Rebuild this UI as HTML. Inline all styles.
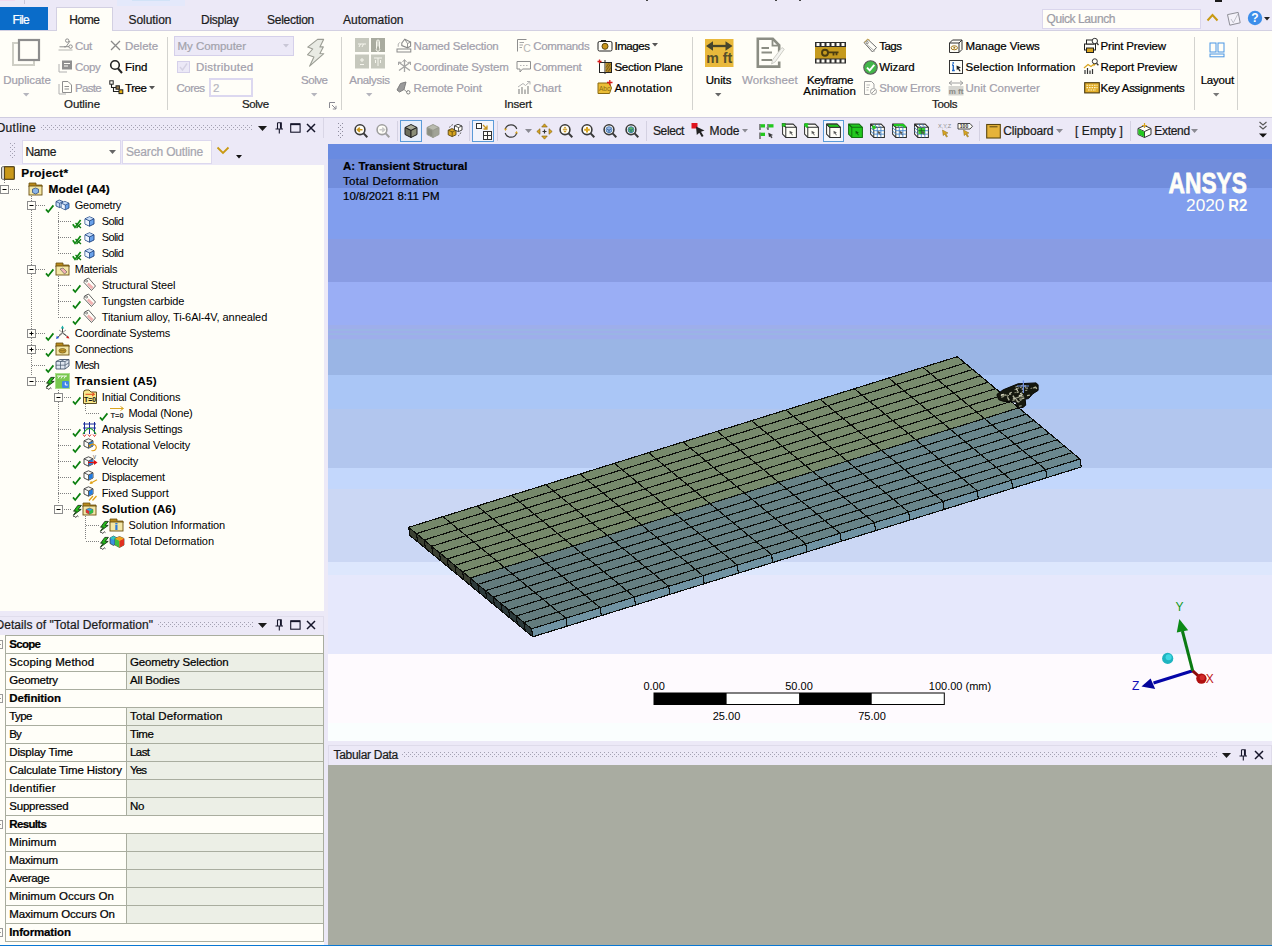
<!DOCTYPE html>
<html><head><meta charset="utf-8"><title>Mechanical</title><style>
html,body{margin:0;padding:0}
body{width:1272px;height:946px;overflow:hidden;background:#ece9f7;position:relative;font-family:"Liberation Sans",sans-serif;}
.r{position:absolute;display:block}
.t{position:absolute;white-space:nowrap;line-height:16px;height:16px;font-family:"Liberation Sans",sans-serif;-webkit-text-stroke:0.22px currentColor}
svg{overflow:visible}
</style></head>
<body>
<div class="r" style="left:117px;top:0px;width:68px;height:6px;background:#e4e9fb;"></div>
<div class="r" style="left:24px;top:0px;width:1px;height:4px;background:#c9c6d8;"></div>
<div class="r" style="left:0px;top:0px;width:15px;height:1px;background:#f3d9ee;"></div>
<div class="r" style="left:646px;top:0px;width:1.5px;height:1px;background:#444;"></div>
<div class="r" style="left:775px;top:0px;width:1.5px;height:1px;background:#444;"></div>
<div class="r" style="left:799px;top:0px;width:1.5px;height:1px;background:#444;"></div>
<div class="r" style="left:1215px;top:0px;width:7px;height:1.5px;background:#1a1a1a;"></div>
<div class="r" style="left:132px;top:0px;width:38px;height:1px;background:#d2e3f7;"></div>
<div class="r" style="left:0px;top:7px;width:48px;height:23px;background:#0a6cc9;"></div>
<div class="t" style="left:12.55px;top:11.60px;font-size:12px;color:#ffffff;letter-spacing:-0.709px;">File</div>
<div class="r" style="left:0px;top:30px;width:1272px;height:88px;background:#fffef8;"></div>
<div class="r" style="left:0px;top:30px;width:1272px;height:1px;background:#d3d0e2;"></div>
<div class="r" style="left:56px;top:7px;width:57px;height:24px;background:#fffef8;border:1px solid #d3d0e2;border-bottom:none;box-sizing:border-box"></div>
<div class="t" style="left:69.30px;top:11.80px;font-size:12px;color:#1b1b1b;letter-spacing:-0.502px;">Home</div>
<div class="t" style="left:128.50px;top:11.80px;font-size:12px;color:#1b1b1b;letter-spacing:-0.046px;">Solution</div>
<div class="t" style="left:201.00px;top:11.80px;font-size:12px;color:#1b1b1b;letter-spacing:-0.264px;">Display</div>
<div class="t" style="left:267.00px;top:11.80px;font-size:12px;color:#1b1b1b;letter-spacing:-0.263px;">Selection</div>
<div class="t" style="left:343.00px;top:11.80px;font-size:12px;color:#1b1b1b;letter-spacing:-0.020px;">Automation</div>
<div class="r" style="left:0px;top:117px;width:1272px;height:1px;background:#cfcce0;"></div>
<div class="r" style="left:1042px;top:9px;width:159px;height:19.5px;background:#fffef8;border:1px solid #dad6ec;box-sizing:border-box"></div>
<div class="t" style="left:1046.50px;top:10.80px;font-size:12px;color:#9d9da6;letter-spacing:-0.406px;">Quick Launch</div>
<svg class="r" style="left:1206px;top:13px;" width="13" height="9" viewBox="0 0 13 9"><path d="M1.5 7.5 L6.5 2 L11.5 7.5" fill="none" stroke="#c99a13" stroke-width="2"/></svg>
<svg class="r" style="left:1225.5px;top:10.5px;" width="16" height="16" viewBox="0 0 16 16"><path d="M1.5 3.6 L12.2 1.4 L14.2 11.8 L3.8 14.2 Z" fill="#f4f2fa" stroke="#8f8f98" stroke-width="1"/><path d="M5 8 L7.3 11.8 L12 2.8" fill="none" stroke="#c2c2cc" stroke-width="1"/></svg>
<svg class="r" style="left:1247px;top:10px;" width="16" height="16" viewBox="0 0 16 16"><circle cx="8" cy="8" r="7.2" fill="#3d8eea"/><text x="8" y="12.3" font-size="12" font-weight="bold" fill="#fff" text-anchor="middle" font-family="Liberation Sans">?</text></svg>
<svg class="r" style="left:1263.5px;top:17.25px;" width="6" height="3.5" viewBox="0 0 6 3.5"><polygon points="0,0 6,0 3,3.5" fill="#222"/></svg>
<div class="r" style="left:167px;top:37px;width:1px;height:73px;background:#d3d3cf;"></div>
<div class="r" style="left:340.5px;top:37px;width:1px;height:73px;background:#d3d3cf;"></div>
<div class="r" style="left:691.5px;top:37px;width:1px;height:73px;background:#d3d3cf;"></div>
<div class="r" style="left:1193.5px;top:37px;width:1px;height:73px;background:#d3d3cf;"></div>
<div class="r" style="left:1237px;top:37px;width:1px;height:73px;background:#d3d3cf;"></div>
<div class="t" style="left:64.00px;top:95.60px;font-size:11.5px;color:#1b1b1b;letter-spacing:-0.062px;">Outline</div>
<div class="t" style="left:241.95px;top:95.60px;font-size:11.5px;color:#1b1b1b;letter-spacing:-0.413px;">Solve</div>
<div class="t" style="left:504.30px;top:95.60px;font-size:11.5px;color:#1b1b1b;letter-spacing:-0.227px;">Insert</div>
<div class="t" style="left:932.00px;top:95.60px;font-size:11.5px;color:#1b1b1b;letter-spacing:-0.329px;">Tools</div>
<svg class="r" style="left:329px;top:102px;" width="8" height="8" viewBox="0 0 8 8"><path d="M0.5 6 V0.5 H6" fill="none" stroke="#8a8a92"/><path d="M3 3 L7 7 M7 3.8 V7 H3.8" fill="none" stroke="#8a8a92"/></svg>
<svg class="r" style="left:11px;top:37px;" width="32" height="32" viewBox="0 0 32 32"><rect x="2" y="6" width="21" height="22" fill="none" stroke="#cfcfc6" stroke-width="2"/><rect x="8" y="3" width="20" height="20" fill="#fffef8" stroke="#8d8d8d" stroke-width="2.2"/></svg>
<div class="t" style="left:3.25px;top:72.30px;font-size:11.5px;color:#a2a0ac;letter-spacing:-0.049px;">Duplicate</div>
<svg class="r" style="left:22.8px;top:92.5px;" width="6.4" height="3.4" viewBox="0 0 6.4 3.4"><polygon points="0,0 6.4,0 3.2,3.4" fill="#b5b5bd"/></svg>
<svg class="r" style="left:58px;top:38px;" width="16" height="14" viewBox="0 0 16 14"><path d="M0.5 12 H14.5" stroke="#b4b4b0"/><path d="M1.5 8.8 H8 L12 3" fill="none" stroke="#8e8e8e" stroke-width="1"/><circle cx="9.2" cy="2.6" r="1.7" fill="none" stroke="#8e8e8e"/><circle cx="12.6" cy="8.6" r="1.7" fill="none" stroke="#8e8e8e"/><path d="M6 8.8 L11 8.6" stroke="#8e8e8e"/></svg>
<div class="t" style="left:75.00px;top:38.00px;font-size:11.5px;color:#a2a0ac;letter-spacing:-0.299px;">Cut</div>
<svg class="r" style="left:58px;top:59px;" width="15" height="15" viewBox="0 0 15 15"><path d="M1 5 V13 H9" fill="none" stroke="#b0b0b0"/><rect x="4" y="1.5" width="10" height="9" fill="#8f8f8f"/><path d="M6 4.5 H12 M6 7 H10" stroke="#fffef8"/></svg>
<div class="t" style="left:75.00px;top:59.20px;font-size:11.5px;color:#a2a0ac;letter-spacing:-0.337px;">Copy</div>
<svg class="r" style="left:58px;top:80px;" width="15" height="15" viewBox="0 0 15 15"><path d="M1 4 V14 H8" fill="none" stroke="#b0b0b0"/><path d="M4.5 1.5 H10 L13.5 5 V12.5 H4.5 Z" fill="#fffef8" stroke="#8e8e8e"/><path d="M6.5 6.5 H11 M6.5 9 H11" stroke="#8e8e8e"/></svg>
<div class="t" style="left:75.00px;top:80.20px;font-size:11.5px;color:#a2a0ac;letter-spacing:-0.681px;">Paste</div>
<svg class="r" style="left:110px;top:40px;" width="11" height="11" viewBox="0 0 11 11"><path d="M1 1 L10 10 M10 1 L1 10" stroke="#8a8a8a" stroke-width="1.3"/></svg>
<div class="t" style="left:125.00px;top:38.00px;font-size:11.5px;color:#a2a0ac;letter-spacing:-0.040px;">Delete</div>
<svg class="r" style="left:109px;top:59px;" width="14" height="15" viewBox="0 0 14 15"><circle cx="6" cy="6" r="4.3" fill="none" stroke="#222" stroke-width="1.6"/><path d="M9 9.5 L13 14" stroke="#222" stroke-width="2"/></svg>
<div class="t" style="left:125.00px;top:59.20px;font-size:11.5px;color:#000;letter-spacing:0.032px;">Find</div>
<svg class="r" style="left:109px;top:79.5px;" width="15" height="15" viewBox="0 0 15 15"><path d="M2.5 4 V7.5 H7 M4.5 7.5 V11.5 H10" fill="none" stroke="#222" stroke-width="1.1"/><rect x="0.8" y="0.8" width="3.4" height="3.4" fill="#fffef8" stroke="#222"/><rect x="7" y="5.8" width="3.4" height="3.4" fill="#9a7b4a" stroke="#222"/><rect x="10" y="9.8" width="3.8" height="3.8" fill="#e6b012" stroke="#222"/></svg>
<div class="t" style="left:125.00px;top:80.20px;font-size:11.5px;color:#000;letter-spacing:-0.430px;">Tree</div>
<svg class="r" style="left:148.5px;top:86.25px;" width="6" height="3.5" viewBox="0 0 6 3.5"><polygon points="0,0 6,0 3,3.5" fill="#555"/></svg>
<div class="r" style="left:174px;top:36px;width:120px;height:19.5px;background:#ece9f7;border:1px solid #d5d0ea;box-sizing:border-box"></div>
<div class="t" style="left:177.50px;top:38.00px;font-size:11.5px;color:#a3a3ac;letter-spacing:-0.047px;">My Computer</div>
<svg class="r" style="left:283px;top:44.25px;" width="6" height="3.5" viewBox="0 0 6 3.5"><polygon points="0,0 6,0 3,3.5" fill="#c9c7d6"/></svg>
<div class="r" style="left:177px;top:60.5px;width:12.5px;height:12.5px;background:#ece9f7;border:1px solid #d5d0ea;box-sizing:border-box"></div>
<svg class="r" style="left:178px;top:62px;" width="11" height="10" viewBox="0 0 11 10"><path d="M2 5 L4.5 8 L9 1.5" fill="none" stroke="#d5d2e3" stroke-width="1.4"/></svg>
<div class="t" style="left:196.00px;top:59.20px;font-size:11.5px;color:#a2a0ac;letter-spacing:0.230px;">Distributed</div>
<div class="t" style="left:176.50px;top:80.20px;font-size:11.5px;color:#a2a0ac;letter-spacing:-0.535px;">Cores</div>
<div class="r" style="left:209.3px;top:78px;width:44px;height:19px;background:#fffef8;border:2px solid #dcd8f0;box-sizing:border-box"></div>
<div class="t" style="left:213.00px;top:80.20px;font-size:11.5px;color:#b6b6c0;">2</div>
<svg class="r" style="left:0px;top:0px;" width="1" height="1" viewBox="0 0 1 1"><polygon points="317.6,39.4 323.6,39.4 319.9,46.9 323.3,46.9 319.9,53.5 323.8,53.7 309.6,66.2 313.9,56.9 307.5,54.8 312.7,49 307.7,47.1" fill="#e9ebe4" stroke="#9b9d94" stroke-width="1.1" stroke-linejoin="round"/></svg>
<div class="t" style="left:301.05px;top:72.30px;font-size:11.5px;color:#a2a0ac;letter-spacing:-0.453px;">Solve</div>
<svg class="r" style="left:310.8px;top:92.5px;" width="6.4" height="3.4" viewBox="0 0 6.4 3.4"><polygon points="0,0 6.4,0 3.2,3.4" fill="#b5b5bd"/></svg>
<svg class="r" style="left:355px;top:37.5px;" width="30" height="31" viewBox="0 0 30 31"><rect x="0" y="0" width="14" height="14" fill="#c6c8bd"/><rect x="16" y="0" width="14" height="14" fill="#a9ab9f"/><!--#c6c8bd--><rect x="0" y="16.5" width="14" height="14" fill="#c6c8bd"/><rect x="16" y="16.5" width="14" height="14" fill="#c6c8bd"/><path d="M3 6 H11 M4 9 L5.5 6 M7 9 L8.5 6" stroke="#f6f6ee" stroke-width="1"/><path d="M23 3 V8.5 M21.5 10.5 a1.8 1.8 0 1 0 3 0 V3.5 a1.5 1.5 0 0 0 -3 0 Z" fill="none" stroke="#f6f6ee" stroke-width="1"/><path d="M5 22 H9 M7 20 V24 M5 26.5 H9" stroke="#f6f6ee" stroke-width="1"/><path d="M19 20 H27 M23 20 V28 M20.5 22 V25 M25.5 22 V25" stroke="#f6f6ee" stroke-width="1"/></svg>
<div class="t" style="left:349.35px;top:72.30px;font-size:11.5px;color:#a2a0ac;letter-spacing:-0.315px;">Analysis</div>
<svg class="r" style="left:365.8px;top:92.5px;" width="6.4" height="3.4" viewBox="0 0 6.4 3.4"><polygon points="0,0 6.4,0 3.2,3.4" fill="#b5b5bd"/></svg>
<svg class="r" style="left:396px;top:37.5px;" width="16" height="15" viewBox="0 0 16 15"><rect x="1" y="11" width="13.8" height="3" fill="#fffef8" stroke="#8a8a8a"/><path d="M5.8 5 L8.8 1.2 L14.6 4 V8.2 L11.5 9.8 L5.8 7.6 Z" fill="#fffef8" stroke="#8a8a8a" stroke-width="1.1"/><path d="M8.8 1.2 L11.5 5.6 L14.6 4 M11.5 5.6 V9.8" fill="none" stroke="#8a8a8a" stroke-width="0.9"/><path d="M2.2 8.8 Q1.4 5.5 4 4.2" fill="none" stroke="#a8a8a8" stroke-width="0.9"/></svg>
<div class="t" style="left:413.60px;top:38.00px;font-size:11.5px;color:#a2a0ac;letter-spacing:-0.172px;">Named Selection</div>
<svg class="r" style="left:397px;top:59px;" width="15" height="15" viewBox="0 0 15 15"><path d="M7.5 1 V13 M2 3.5 L13 11.5 M13 3.5 L2 11.5" stroke="#a4a4a4" stroke-width="1.3"/><path d="M5.5 3 L7.5 0.5 L9.5 3 M1.5 6 L1.5 3 L4.5 3.5 M13.5 6 V3 L10.5 3.5" fill="none" stroke="#a4a4a4" stroke-width="1"/></svg>
<div class="t" style="left:413.60px;top:59.20px;font-size:11.5px;color:#a2a0ac;letter-spacing:-0.164px;">Coordinate System</div>
<svg class="r" style="left:396px;top:81px;" width="16" height="14" viewBox="0 0 16 14"><path d="M1 9 L4.5 2.5 L10 1 L8 8.5 L3.5 11 Z" fill="#9a9a9a" stroke="#7e7e7e"/><path d="M8 8.5 L11 11" stroke="#8e8e8e"/><circle cx="12.3" cy="11.3" r="1.7" fill="#fffef8" stroke="#7e7e7e"/></svg>
<div class="t" style="left:413.60px;top:80.20px;font-size:11.5px;color:#a2a0ac;letter-spacing:-0.123px;">Remote Point</div>
<svg class="r" style="left:516px;top:38px;" width="15" height="15" viewBox="0 0 15 15"><path d="M1.5 13.5 V1.5 H10.5" fill="none" stroke="#8e8e8e"/><path d="M3.5 4.5 H8 M3.5 7 H7 M3.5 9.5 H6" stroke="#a6a6a6"/><text x="7.2" y="13.8" font-size="10.5" fill="#b6b6b6" font-family="Liberation Sans">C</text></svg>
<div class="t" style="left:533.30px;top:38.00px;font-size:11.5px;color:#a2a0ac;letter-spacing:-0.350px;">Commands</div>
<svg class="r" style="left:516px;top:60px;" width="16" height="14" viewBox="0 0 16 14"><path d="M1 1.5 H14.5 V9 H6.5 L4 12 V9 H1 Z" fill="#fffef8" stroke="#8e8e8e"/><path d="M4 5.5 H11.5" stroke="#b6b6b6" stroke-dasharray="1.5 1.5"/></svg>
<div class="t" style="left:533.30px;top:59.20px;font-size:11.5px;color:#a2a0ac;letter-spacing:-0.221px;">Comment</div>
<svg class="r" style="left:516px;top:80px;" width="16" height="15" viewBox="0 0 16 15"><path d="M3 14 V9 M6 14 V7 M9 14 V9.5 M12 14 V6" stroke="#8e8e8e" stroke-width="1.2"/><path d="M2 7 L7 3.5 L9.5 5.5 L14 1.5 M11 1.5 H14 V4.5" fill="none" stroke="#b2b2b2"/></svg>
<div class="t" style="left:533.30px;top:80.20px;font-size:11.5px;color:#a2a0ac;letter-spacing:-0.084px;">Chart</div>
<svg class="r" style="left:597px;top:39px;" width="16" height="13" viewBox="0 0 16 13"><rect x="1" y="2.5" width="14" height="9.5" rx="1.5" fill="#fffef8" stroke="#222"/><rect x="4" y="1" width="5" height="2" fill="#222"/><circle cx="8" cy="7.3" r="3" fill="#c8951c" stroke="#5d4a12"/></svg>
<div class="t" style="left:614.40px;top:38.00px;font-size:11.5px;color:#000;letter-spacing:-0.419px;">Images</div>
<svg class="r" style="left:652px;top:43.25px;" width="6" height="3.5" viewBox="0 0 6 3.5"><polygon points="0,0 6,0 3,3.5" fill="#555"/></svg>
<svg class="r" style="left:597px;top:59px;" width="16" height="16" viewBox="0 0 16 16"><rect x="2.5" y="3.5" width="12" height="10" fill="#fffef8" stroke="#222"/><path d="M8 1 V15" stroke="#222"/><rect x="8.5" y="4" width="5.5" height="9" fill="#b58a2a"/><path d="M9 12 L13.5 5 M9 8.5 L12 4.2 M11 12.8 L13.8 8.5" stroke="#6e5312" stroke-width="0.8"/><path d="M0.5 2.5 H4.5 M2.5 0.5 V4.5" stroke="#d71a1a" stroke-width="1.3"/></svg>
<div class="t" style="left:614.40px;top:59.20px;font-size:11.5px;color:#000;letter-spacing:-0.213px;">Section Plane</div>
<svg class="r" style="left:597px;top:80px;" width="17" height="15" viewBox="0 0 17 15"><path d="M1 3 H12.5 L14.5 8 L12.5 13.5 H1 Z" fill="#ebbd35" stroke="#8a6a12"/><text x="2" y="11" font-size="6.5" fill="#8a6a12" font-family="Liberation Sans">Abc</text><path d="M10 2.5 H15.5 M12.8 0 V5.2" stroke="#d71a1a" stroke-width="1.3"/></svg>
<div class="t" style="left:614.40px;top:80.20px;font-size:11.5px;color:#000;letter-spacing:0.301px;">Annotation</div>
<svg class="r" style="left:705px;top:39px;" width="28.5" height="28" viewBox="0 0 28.5 28"><rect width="28.5" height="28" fill="#e9b93c"/><path d="M5 7 H23.5" stroke="#47452c" stroke-width="2.3"/><path d="M8 2.3 L1 7 L8 11.7 Z M20.5 2.3 L27.5 7 L20.5 11.7 Z" fill="#47452c"/><text x="14.2" y="24.3" font-size="15.5" font-weight="bold" fill="#57502a" text-anchor="middle" font-family="Liberation Sans" textLength="26" lengthAdjust="spacingAndGlyphs">m ft</text></svg>
<div class="t" style="left:705.65px;top:72.30px;font-size:11.5px;color:#000;letter-spacing:-0.100px;">Units</div>
<svg class="r" style="left:714.8px;top:92.5px;" width="6.4" height="3.4" viewBox="0 0 6.4 3.4"><polygon points="0,0 6.4,0 3.2,3.4" fill="#666"/></svg>
<svg class="r" style="left:755px;top:37px;" width="30" height="32" viewBox="0 0 30 32"><path d="M24.2 15 V8.3 L17.8 1.8 H2.8 V29.6 H24.2 V24.5" fill="none" stroke="#8b8d83" stroke-width="2.6"/><path d="M17.5 2 V8.6 H24" fill="none" stroke="#8b8d83" stroke-width="1.8"/><path d="M6.5 11 H14 M6.5 15.5 H17 M6.5 23 H17" stroke="#8b8d83" stroke-width="1.9"/><path d="M16.5 27 L17.8 22.5 L27 10.5 L29.3 12.2 L20.3 24.8 Z" fill="#f3f3ef" stroke="#c9c9c2" stroke-width="0.9"/></svg>
<div class="t" style="left:742.10px;top:72.30px;font-size:11.5px;color:#a2a0ac;letter-spacing:0.116px;">Worksheet</div>
<svg class="r" style="left:814.5px;top:42px;" width="31" height="21.5" viewBox="0 0 31 21.5"><rect x="0" y="0" width="31" height="21.5" fill="#2c2c2c"/><rect x="0" y="5" width="31" height="11.5" fill="#c59a1e"/><rect x="1.5" y="1" width="3" height="3" fill="#fffef8"/><rect x="1.5" y="17.5" width="3" height="3" fill="#fffef8"/><rect x="6.5" y="1" width="3" height="3" fill="#fffef8"/><rect x="6.5" y="17.5" width="3" height="3" fill="#fffef8"/><rect x="11.5" y="1" width="3" height="3" fill="#fffef8"/><rect x="11.5" y="17.5" width="3" height="3" fill="#fffef8"/><rect x="16.5" y="1" width="3" height="3" fill="#fffef8"/><rect x="16.5" y="17.5" width="3" height="3" fill="#fffef8"/><rect x="21.5" y="1" width="3" height="3" fill="#fffef8"/><rect x="21.5" y="17.5" width="3" height="3" fill="#fffef8"/><rect x="26.5" y="1" width="3" height="3" fill="#fffef8"/><rect x="26.5" y="17.5" width="3" height="3" fill="#fffef8"/><circle cx="10" cy="10.7" r="3" fill="none" stroke="#4a3c10" stroke-width="1.9"/><path d="M13 10.3 H23.5 M18.5 10.7 V13.6 M21.5 10.7 V13.2" stroke="#4a3c10" stroke-width="1.8" fill="none"/></svg>
<div class="t" style="left:807.00px;top:72.30px;font-size:11.5px;color:#000;letter-spacing:-0.402px;">Keyframe</div>
<div class="t" style="left:803.35px;top:83.00px;font-size:11.5px;color:#000;letter-spacing:0.174px;">Animation</div>
<svg class="r" style="left:862px;top:38px;" width="16" height="16" viewBox="0 0 16 16"><path d="M2 4.5 L6 1.5 L14.5 9.5 L10.5 14 Z" fill="#fffef8" stroke="#6b6b6b"/><path d="M5 6.5 L13 13.5" stroke="#9d9d9d" stroke-width="0.8"/><circle cx="5.2" cy="4.6" r="1.1" fill="none" stroke="#6b6b6b" stroke-width="0.8"/><path d="M2.5 4.5 L5.5 1 L8 2.5" fill="none" stroke="#caa64a" stroke-width="0.9"/></svg>
<div class="t" style="left:879.20px;top:38.00px;font-size:11.5px;color:#000;letter-spacing:-0.523px;">Tags</div>
<svg class="r" style="left:863px;top:60px;" width="15" height="15" viewBox="0 0 15 15"><circle cx="7.5" cy="7.5" r="6.7" fill="#43b649" stroke="#5a5a5a" stroke-width="1.1"/><path d="M4 7.6 L6.7 10.4 L11.3 4.8" fill="none" stroke="#fff" stroke-width="1.9"/></svg>
<div class="t" style="left:879.20px;top:59.20px;font-size:11.5px;color:#000;letter-spacing:-0.047px;">Wizard</div>
<svg class="r" style="left:863px;top:80px;" width="15" height="16" viewBox="0 0 15 16"><path d="M11 8 V4 L8.5 1.5 H1.5 V14.5 H6.5" fill="none" stroke="#a0a0a0"/><path d="M3.5 5 H7 M3.5 7.5 H6 M3.5 10 H5.5" stroke="#bbbbbb"/><circle cx="10.5" cy="11.5" r="3" fill="#fffef8" stroke="#a0a0a0"/><path d="M8.6 13.4 L12.4 9.6" stroke="#a0a0a0"/></svg>
<div class="t" style="left:879.20px;top:80.20px;font-size:11.5px;color:#a2a0ac;letter-spacing:-0.206px;">Show Errors</div>
<svg class="r" style="left:948px;top:38px;" width="16" height="16" viewBox="0 0 16 16"><path d="M1.5 5 L4.5 2 H14 V11.5 L11 14.5 H1.5 Z" fill="#fffef8" stroke="#333"/><path d="M1.5 5 H11 V14.5 M11 5 L14 2" fill="none" stroke="#333"/><ellipse cx="6.3" cy="9.8" rx="3.2" ry="2" fill="#fffef8" stroke="#a3791a"/><circle cx="6.3" cy="9.8" r="1" fill="#a3791a"/></svg>
<div class="t" style="left:965.50px;top:38.00px;font-size:11.5px;color:#000;letter-spacing:-0.077px;">Manage Views</div>
<svg class="r" style="left:948px;top:59px;" width="16" height="16" viewBox="0 0 16 16"><rect x="1.5" y="1.5" width="13" height="13" fill="#fffef8" stroke="#333"/><path d="M5.3 6 V11.5 M4 6 H5.3 M4 11.5 H6.8" stroke="#1f66c4" stroke-width="1.4" fill="none"/><circle cx="5.2" cy="3.9" r="0.9" fill="#1f66c4"/><path d="M8.5 6.5 L13 8.5 L11 9.3 L12.6 12 L11.5 12.6 L10 10 L8.8 11.3 Z" fill="#222"/></svg>
<div class="t" style="left:965.50px;top:59.20px;font-size:11.5px;color:#000;letter-spacing:0.094px;">Selection Information</div>
<svg class="r" style="left:948px;top:80px;" width="16" height="16" viewBox="0 0 16 16"><rect x="0.5" y="6" width="15" height="9.5" fill="#d5d5d0"/><path d="M1.5 3 H14.5" stroke="#a0a0a0"/><path d="M4 0.8 L1 3 L4 5.2 M12 0.8 L15 3 L12 5.2" fill="none" stroke="#a0a0a0"/><text x="8" y="13.8" font-size="8" font-weight="bold" fill="#8a8a86" text-anchor="middle" font-family="Liberation Sans">m ft</text></svg>
<div class="t" style="left:965.50px;top:80.20px;font-size:11.5px;color:#a2a0ac;letter-spacing:0.012px;">Unit Converter</div>
<svg class="r" style="left:1083px;top:37px;" width="16" height="17" viewBox="0 0 16 17"><rect x="1.5" y="7" width="11" height="6" fill="#fffef8" stroke="#222"/><rect x="3.5" y="3" width="7" height="4" fill="#fffef8" stroke="#222"/><rect x="3.5" y="11" width="7" height="4.5" fill="#d9a520" stroke="#222"/><circle cx="11.8" cy="4" r="2.7" fill="#fffef8" stroke="#333"/><path d="M13.7 6 L15.5 8" stroke="#333" stroke-width="1.3"/></svg>
<div class="t" style="left:1100.50px;top:38.00px;font-size:11.5px;color:#000;letter-spacing:-0.180px;">Print Preview</div>
<svg class="r" style="left:1083px;top:58px;" width="16" height="17" viewBox="0 0 16 17"><path d="M2 16 V12 M4.5 16 V10 M7 16 V12.5 M9.5 16 V11" stroke="#333" stroke-width="1.2"/><path d="M1 10 L5 6.5 L8 8.5 L12.5 5" fill="none" stroke="#d9a520" stroke-width="1.3"/><path d="M10.8 8.5 L13.5 5.2 L9.8 4.3 Z" fill="#d9a520"/><circle cx="11.8" cy="3.3" r="2.5" fill="#fffef8" stroke="#333"/><path d="M13.5 5.2 L15.4 7.2" stroke="#333" stroke-width="1.3"/></svg>
<div class="t" style="left:1100.50px;top:59.20px;font-size:11.5px;color:#000;letter-spacing:-0.165px;">Report Preview</div>
<svg class="r" style="left:1084px;top:82px;" width="16" height="12" viewBox="0 0 16 12"><rect x="0.7" y="0.7" width="14.6" height="10.2" fill="#e2ae2a" stroke="#4a3a10" stroke-width="1.1"/><path d="M2.5 3.3 H13.5 M2.5 5.6 H13.5 M4 8 H12" stroke="#fff5cf" stroke-width="1.1" stroke-dasharray="1.6 0.9"/></svg>
<div class="t" style="left:1100.50px;top:80.20px;font-size:11.5px;color:#000;letter-spacing:-0.281px;">Key Assignments</div>
<svg class="r" style="left:1209px;top:42px;" width="17" height="16" viewBox="0 0 17 16"><rect x="1" y="1" width="6" height="9" fill="none" stroke="#4a96e4" stroke-width="1"/><rect x="9" y="1" width="6" height="9" fill="none" stroke="#4a96e4" stroke-width="1"/><rect x="1" y="12" width="14" height="2.8" fill="none" stroke="#4a96e4" stroke-width="1"/></svg>
<div class="t" style="left:1200.70px;top:72.30px;font-size:11.5px;color:#000;letter-spacing:-0.221px;">Layout</div>
<svg class="r" style="left:1212.8px;top:92.5px;" width="6.4" height="3.4" viewBox="0 0 6.4 3.4"><polygon points="0,0 6.4,0 3.2,3.4" fill="#777"/></svg>
<svg class="r" style="left:337.5px;top:123px;" width="5" height="19" viewBox="0 0 5 19"><g fill="#8f8d9e"><rect x="0" y="0" width="1" height="1"/><rect x="4" y="0" width="1" height="1"/><rect x="2" y="2" width="1" height="1"/><rect x="0" y="4" width="1" height="1"/><rect x="4" y="4" width="1" height="1"/><rect x="2" y="6" width="1" height="1"/><rect x="0" y="8" width="1" height="1"/><rect x="4" y="8" width="1" height="1"/><rect x="2" y="10" width="1" height="1"/><rect x="0" y="12" width="1" height="1"/><rect x="4" y="12" width="1" height="1"/><rect x="2" y="14" width="1" height="1"/></g></svg>
<svg class="r" style="left:353px;top:122.8px;" width="16" height="16" viewBox="0 0 16 16"><circle cx="7" cy="6.7" r="4.9" fill="#fffef8" stroke="#3a3a3a" stroke-width="1.6"/><path d="M10.6 10.4 L14.3 14.3" stroke="#3a3a3a" stroke-width="2"/><path d="M9.5 6.7 H5 M6.8 4.6 L4.5 6.7 L6.8 8.8" fill="none" stroke="#c8951c" stroke-width="1.6"/></svg>
<svg class="r" style="left:375px;top:122.8px;" width="16" height="16" viewBox="0 0 16 16"><circle cx="7" cy="6.7" r="4.9" fill="#fffef8" stroke="#9e9e9e" stroke-width="1.6"/><path d="M10.6 10.4 L14.3 14.3" stroke="#9e9e9e" stroke-width="2"/><path d="M4.5 6.7 H9 M7.2 4.6 L9.5 6.7 L7.2 8.8" fill="none" stroke="#c9c9c9" stroke-width="1.6"/></svg>
<div class="r" style="left:396.5px;top:121px;width:1px;height:20px;background:#d4d1e2;"></div>
<div class="r" style="left:400px;top:120px;width:22px;height:22px;background:#e6edfa;border:1px solid #5b9bd8;box-sizing:border-box"></div>
<svg class="r" style="left:402.8px;top:122.8px;" width="16" height="16" viewBox="0 0 16 16"><path d="M8 1.5 L14 4.5 L8 7.5 L2 4.5 Z" fill="#a9ab98" stroke="#222" /><path d="M2 4.5 L8 7.5 V14.5 L2 11.5 Z" fill="#6c6f5c" stroke="#222" /><path d="M14 4.5 L8 7.5 V14.5 L14 11.5 Z" fill="#8b8e78" stroke="#222" /></svg>
<svg class="r" style="left:425px;top:122.8px;" width="16" height="16" viewBox="0 0 16 16"><path d="M8 1.5 L14 4.5 L8 7.5 L2 4.5 Z" fill="#b9bbaf" stroke="#9a9c90" /><path d="M2 4.5 L8 7.5 V14.5 L2 11.5 Z" fill="#8b8d80" stroke="#9a9c90" /><path d="M14 4.5 L8 7.5 V14.5 L14 11.5 Z" fill="#a1a396" stroke="#9a9c90" /></svg>
<svg class="r" style="left:446px;top:122px;" width="18" height="18" viewBox="0 0 18 18"><path d="M2.2 8.2 L6 6.6 L10 8.2 V12.8 L6.2 14.6 L2.2 12.8 Z" fill="#d9a520" stroke="#5c4710" stroke-width="0.9"/><path d="M2.2 8.2 L6.2 9.9 L10 8.2 M6.2 9.9 V14.6" fill="none" stroke="#5c4710" stroke-width="0.8"/><path d="M8.5 3.8 L12 2.3 L16 4 V8 L12.5 9.6 L8.5 8 Z" fill="#fffef8" stroke="#333" stroke-width="0.9"/><path d="M8.5 3.8 L12.5 5.5 L16 4 M12.5 5.5 V9.6" fill="none" stroke="#333" stroke-width="0.8"/><path d="M3.5 5.5 A6 6 0 0 1 7 2.6 M14.8 10.5 A6 6 0 0 1 11.5 14.2" fill="none" stroke="#555" stroke-width="1" stroke-dasharray="1.6 1.2"/></svg>
<div class="r" style="left:469px;top:121px;width:1px;height:20px;background:#d4d1e2;"></div>
<div class="r" style="left:472px;top:120px;width:22px;height:22px;background:#f3f5fc;border:1px solid #5b9bd8;box-sizing:border-box"></div>
<svg class="r" style="left:475px;top:122px;" width="17" height="18" viewBox="0 0 17 18"><rect x="1.5" y="1.5" width="5" height="5" fill="#fffef8" stroke="#333"/><path d="M8 3 L12 7 M12 3.5 V7 H8.5" fill="none" stroke="#c8951c" stroke-width="1.3"/><rect x="8.5" y="9.5" width="8" height="8" fill="#fffef8" stroke="#333"/><path d="M12.5 9.5 V17.5 M8.5 13.5 H16.5" stroke="#333"/></svg>
<div class="r" style="left:496.5px;top:121px;width:1px;height:20px;background:#d4d1e2;"></div>
<svg class="r" style="left:502.5px;top:122.5px;" width="16" height="16" viewBox="0 0 16 16"><path d="M13.8 6 A6 6 0 0 0 2.3 6.2 M2.2 10 A6 6 0 0 0 13.7 9.8" fill="none" stroke="#3a3a3a" stroke-width="1.15"/><path d="M1 5.4 L2.3 8 L4.2 5.7 Z M15 10.6 L13.7 8 L11.8 10.3 Z" fill="#d9a520"/></svg>
<svg class="r" style="left:524.5px;top:129px;" width="7" height="4" viewBox="0 0 7 4"><polygon points="0,0 7,0 3.5,4" fill="#8a8a92"/></svg>
<svg class="r" style="left:535.5px;top:122.5px;" width="17" height="17" viewBox="0 0 17 17"><path d="M8.5 0.8 L11.3 4 H5.7 Z M8.5 16.2 L11.3 13 H5.7 Z M0.8 8.5 L4 5.7 V11.3 Z M16.2 8.5 L13 5.7 V11.3 Z" fill="#d9a520" stroke="#7a5c0c" stroke-width="0.6"/><path d="M6.5 8.5 H10.5 M8.5 6.5 V10.5" stroke="#333" stroke-width="1.2"/></svg>
<svg class="r" style="left:557.5px;top:122.8px;" width="16" height="16" viewBox="0 0 16 16"><circle cx="7" cy="6.7" r="4.9" fill="#fffef8" stroke="#3a3a3a" stroke-width="1.6"/><path d="M10.6 10.4 L14.3 14.3" stroke="#3a3a3a" stroke-width="2"/><path d="M7 3.6 L8.8 5.6 H5.2 Z M7 9.8 L8.8 7.8 H5.2 Z" fill="#c8951c"/><path d="M4.8 6.7 H9.2" stroke="#c8951c"/></svg>
<svg class="r" style="left:579.5px;top:122.8px;" width="16" height="16" viewBox="0 0 16 16"><circle cx="7" cy="6.7" r="4.9" fill="#fffef8" stroke="#3a3a3a" stroke-width="1.6"/><path d="M10.6 10.4 L14.3 14.3" stroke="#3a3a3a" stroke-width="2"/><path d="M4.2 6.7 H9.8 M7 3.9 V9.5" stroke="#d9a520" stroke-width="2"/></svg>
<svg class="r" style="left:601.5px;top:122.8px;" width="16" height="16" viewBox="0 0 16 16"><circle cx="7" cy="6.7" r="4.9" fill="#fffef8" stroke="#3a3a3a" stroke-width="1.6"/><path d="M10.6 10.4 L14.3 14.3" stroke="#3a3a3a" stroke-width="2"/><circle cx="7" cy="6.7" r="3" fill="#9bbbe6" stroke="#3b6fb0" stroke-width="0.8"/><path d="M5 6 L7 7.3 L9 6 M7 7.3 V9.3" stroke="#27508a" stroke-width="0.8" fill="none"/></svg>
<svg class="r" style="left:623.5px;top:122.8px;" width="16" height="16" viewBox="0 0 16 16"><circle cx="7" cy="6.7" r="4.9" fill="#fffef8" stroke="#3a3a3a" stroke-width="1.6"/><path d="M10.6 10.4 L14.3 14.3" stroke="#3a3a3a" stroke-width="2"/><circle cx="7" cy="6.7" r="3" fill="#5ab865" stroke="#2e6fb0" stroke-width="0.8"/><path d="M5 6 L7 7.3 L9 6 M7 7.3 V9.3" stroke="#1f5d8a" stroke-width="0.8" fill="none"/></svg>
<div class="r" style="left:645.5px;top:121px;width:1px;height:20px;background:#d4d1e2;"></div>
<div class="t" style="left:653.00px;top:122.60px;font-size:12px;color:#1b1b1b;letter-spacing:-0.392px;">Select</div>
<svg class="r" style="left:691px;top:122px;" width="15" height="16" viewBox="0 0 15 16"><rect x="0.5" y="1" width="6" height="5.5" fill="#e0141e"/><path d="M5 4.5 L13.5 8.5 L10 9.8 L12.6 14 L10.8 15 L8.3 10.8 L5.8 13 Z" fill="#222"/></svg>
<div class="t" style="left:709.50px;top:122.60px;font-size:12px;color:#1b1b1b;letter-spacing:-0.004px;">Mode</div>
<svg class="r" style="left:742px;top:129.3px;" width="6" height="3.4" viewBox="0 0 6 3.4"><polygon points="0,0 6,0 3,3.4" fill="#8a8a92"/></svg>
<svg class="r" style="left:758px;top:122.5px;" width="17" height="17" viewBox="0 0 17 17"><path d="M2 1 V7 M2 9.5 V16" stroke="#333" stroke-width="1.1"/><rect x="2.5" y="1.2" width="4.5" height="3.3" fill="#22c81e"/><rect x="2.5" y="9.7" width="4.5" height="3.3" fill="#22c81e"/><path d="M10 1 V7" stroke="#333" stroke-width="1.1"/><rect x="10.5" y="1.2" width="5" height="3.3" fill="#22c81e"/><path d="M8 4.5 L10 6 M10.5 10 L14.5 12 L13 12.5 L14.2 14.6 L13.4 15 L12.2 13 L11.2 14 Z" fill="#333" stroke="#333" stroke-width="0.4"/></svg>
<svg class="r" style="left:780.5px;top:122.3px;" width="17" height="17" viewBox="0 0 16 16"><path d="M4.5 5 L1.5 2 H11.5 L14.5 5 V14.5 H4.5 L1.5 11.5 V2" fill="#fffef8" stroke="#2e2e2e" stroke-width="0.95" stroke-linejoin="round"/><path d="M1.5 2 L4.5 5 H14.5 M4.5 5 V14.5" fill="none" stroke="#2e2e2e" stroke-width="0.95"/><rect x="1" y="1.4" width="3" height="2.6" fill="#22c81e" stroke="#157a12" stroke-width="0.5"/><path d="M8 8.2 L11.3 9.8 L10 10.3 L11.1 12.2 L10.4 12.6 L9.3 10.7 L8.3 11.6 Z" fill="#555"/></svg>
<svg class="r" style="left:802.5px;top:122.3px;" width="17" height="17" viewBox="0 0 16 16"><path d="M4.5 5 L1.5 2 H11.5 L14.5 5 V14.5 H4.5 L1.5 11.5 V2" fill="#fffef8" stroke="#2e2e2e" stroke-width="0.95" stroke-linejoin="round"/><path d="M1.5 2 L4.5 5 H14.5 M4.5 5 V14.5" fill="none" stroke="#2e2e2e" stroke-width="0.95"/><path d="M1.6 2.1 L4.4 4.9" stroke="#22c81e" stroke-width="2.4" fill="none"/><path d="M1.5 2 H5" stroke="#22c81e" stroke-width="1.6"/><path d="M8 8.2 L11.3 9.8 L10 10.3 L11.1 12.2 L10.4 12.6 L9.3 10.7 L8.3 11.6 Z" fill="#555"/></svg>
<div class="r" style="left:822.5px;top:120px;width:21.5px;height:22px;background:#f3f6fd;border:1px solid #5b9bd8;box-sizing:border-box"></div>
<svg class="r" style="left:824.8px;top:122.3px;" width="17" height="17" viewBox="0 0 16 16"><path d="M4.5 5 L1.5 2 H11.5 L14.5 5 V14.5 H4.5 L1.5 11.5 V2" fill="#fffef8" stroke="#2e2e2e" stroke-width="0.95" stroke-linejoin="round"/><path d="M1.5 2 L4.5 5 H14.5 M4.5 5 V14.5" fill="none" stroke="#2e2e2e" stroke-width="0.95"/><path d="M1.5 2 H11.5 L14.5 5 H4.5 Z" fill="#22c81e" stroke="#2e2e2e" stroke-width="0.9"/><path d="M8 8.2 L11.3 9.8 L10 10.3 L11.1 12.2 L10.4 12.6 L9.3 10.7 L8.3 11.6 Z" fill="#555"/></svg>
<svg class="r" style="left:846.8px;top:122.3px;" width="17" height="17" viewBox="0 0 16 16"><path d="M4.5 5 L1.5 2 H11.5 L14.5 5 V14.5 H4.5 L1.5 11.5 V2" fill="#22c81e" stroke="#127010" stroke-width="0.95" stroke-linejoin="round"/><path d="M1.5 2 L4.5 5 H14.5 M4.5 5 V14.5" fill="none" stroke="#127010" stroke-width="0.95"/><path d="M8 8.2 L11.3 9.8 L10 10.3 L11.1 12.2 L10.4 12.6 L9.3 10.7 L8.3 11.6 Z" fill="#0c5a0a"/></svg>
<svg class="r" style="left:868.8px;top:122.3px;" width="17" height="17" viewBox="0 0 16 16"><path d="M4.5 5 L1.5 2 H11.5 L14.5 5 V14.5 H4.5 L1.5 11.5 V2" fill="#fffef8" stroke="#2e2e2e" stroke-width="0.95" stroke-linejoin="round"/><path d="M1.5 2 L4.5 5 H14.5 M4.5 5 V14.5" fill="none" stroke="#2e2e2e" stroke-width="0.95"/><path d="M7.8 5 V14.5 M11.2 5 V14.5 M4.5 8.2 H14.5 M4.5 11.4 H14.5 M4.8 2 L7.8 5 M8.2 2 L11.2 5 M1.5 5.2 L4.5 8.2 M1.5 8.4 L4.5 11.4" stroke="#3b7fd0" stroke-width="0.8" fill="none"/><rect x="3" y="3.4" width="3.2" height="3" fill="#22c81e"/><path d="M8 8.2 L11.3 9.8 L10 10.3 L11.1 12.2 L10.4 12.6 L9.3 10.7 L8.3 11.6 Z" fill="#555"/></svg>
<svg class="r" style="left:890.8px;top:122.3px;" width="17" height="17" viewBox="0 0 16 16"><path d="M4.5 5 L1.5 2 H11.5 L14.5 5 V14.5 H4.5 L1.5 11.5 V2" fill="#fffef8" stroke="#2e2e2e" stroke-width="0.95" stroke-linejoin="round"/><path d="M1.5 2 L4.5 5 H14.5 M4.5 5 V14.5" fill="none" stroke="#2e2e2e" stroke-width="0.95"/><path d="M7.8 5 V14.5 M11.2 5 V14.5 M4.5 8.2 H14.5 M4.5 11.4 H14.5 M4.8 2 L7.8 5 M8.2 2 L11.2 5 M1.5 5.2 L4.5 8.2 M1.5 8.4 L4.5 11.4" stroke="#3b7fd0" stroke-width="0.8" fill="none"/><path d="M2.5 3 H11.5 L13.5 5" stroke="#22c81e" stroke-width="2.2" fill="none"/><path d="M8 8.2 L11.3 9.8 L10 10.3 L11.1 12.2 L10.4 12.6 L9.3 10.7 L8.3 11.6 Z" fill="#555"/></svg>
<svg class="r" style="left:912.8px;top:122.3px;" width="17" height="17" viewBox="0 0 16 16"><path d="M4.5 5 L1.5 2 H11.5 L14.5 5 V14.5 H4.5 L1.5 11.5 V2" fill="#fffef8" stroke="#2e2e2e" stroke-width="0.95" stroke-linejoin="round"/><path d="M1.5 2 L4.5 5 H14.5 M4.5 5 V14.5" fill="none" stroke="#2e2e2e" stroke-width="0.95"/><path d="M7.8 5 V14.5 M11.2 5 V14.5 M4.5 8.2 H14.5 M4.5 11.4 H14.5 M4.8 2 L7.8 5 M8.2 2 L11.2 5 M1.5 5.2 L4.5 8.2 M1.5 8.4 L4.5 11.4" stroke="#3b7fd0" stroke-width="0.8" fill="none"/><rect x="5.2" y="5.6" width="6" height="5.8" fill="#22c81e" opacity="0.9"/><path d="M7.8 5.6 V11.4 M5.2 8.2 H11.2" stroke="#145c12" stroke-width="0.7"/><path d="M8 8.2 L11.3 9.8 L10 10.3 L11.1 12.2 L10.4 12.6 L9.3 10.7 L8.3 11.6 Z" fill="#555"/></svg>
<svg class="r" style="left:935.5px;top:122px;" width="17" height="17" viewBox="0 0 17 17"><text x="8.5" y="5.5" font-size="5.5" fill="#8a8a8a" text-anchor="middle" font-family="Liberation Sans">X,Y,Z</text><path d="M6.5 8 L12 11 L9.8 11.6 L11.5 14.5 L10.4 15.1 L8.8 12.2 L7.2 13.6 Z" fill="#d9a520" stroke="#8a6a12" stroke-width="0.5"/></svg>
<svg class="r" style="left:957px;top:122px;" width="17" height="17" viewBox="0 0 17 17"><path d="M1 1.5 H13 L15.5 4.3 L13 7 H1 Z" fill="#fffef8" stroke="#333" stroke-width="0.9"/><text x="7" y="6.2" font-size="5" fill="#333" text-anchor="middle" font-family="Liberation Sans" font-weight="bold">100</text><path d="M6.5 8 L12 11 L9.8 11.6 L11.5 14.5 L10.4 15.1 L8.8 12.2 L7.2 13.6 Z" fill="#d9a520" stroke="#8a6a12" stroke-width="0.5"/></svg>
<div class="r" style="left:978.5px;top:121px;width:1px;height:20px;background:#d4d1e2;"></div>
<svg class="r" style="left:985.5px;top:123px;" width="15" height="16" viewBox="0 0 15 16"><rect x="0.7" y="1.5" width="13.6" height="13.5" fill="#e6b33a" stroke="#5c4710" stroke-width="1.1"/><path d="M3.5 3.8 H11.5" stroke="#5c4710" stroke-width="1"/></svg>
<div class="t" style="left:1003.30px;top:122.60px;font-size:12px;color:#1b1b1b;letter-spacing:-0.152px;">Clipboard</div>
<svg class="r" style="left:1056px;top:129px;" width="7" height="4" viewBox="0 0 7 4"><polygon points="0,0 7,0 3.5,4" fill="#8a8a92"/></svg>
<div class="t" style="left:1075.00px;top:122.60px;font-size:12px;color:#1b1b1b;letter-spacing:0.073px;">[ Empty ]</div>
<div class="r" style="left:1130px;top:121px;width:1px;height:20px;background:#d4d1e2;"></div>
<svg class="r" style="left:1136px;top:122px;" width="17" height="17" viewBox="0 0 17 17"><path d="M2 6.5 L8.5 3.5 L15 6.5 V12.5 L8.5 15.5 L2 12.5 Z" fill="#fffef8" stroke="#333"/><path d="M2 6.5 L8.5 9.5 L15 6.5 M8.5 9.5 V15.5" fill="none" stroke="#333"/><path d="M2.4 7 L8.2 9.8 V15 L2.4 12.3 Z" fill="#22c81e"/><path d="M8.5 1 V6 M6 3.5 H11" stroke="#d9a520" stroke-width="1.2"/></svg>
<div class="t" style="left:1154.30px;top:122.60px;font-size:12px;color:#1b1b1b;letter-spacing:-0.310px;">Extend</div>
<svg class="r" style="left:1191px;top:129px;" width="7" height="4" viewBox="0 0 7 4"><polygon points="0,0 7,0 3.5,4" fill="#8a8a92"/></svg>
<svg class="r" style="left:1258px;top:121px;" width="10" height="18" viewBox="0 0 10 18"><path d="M1.5 1 L5 4 L8.5 1 M1.5 5 L5 8 L8.5 5" fill="none" stroke="#555" stroke-width="1.1"/><polygon points="1,12.5 9,12.5 5,16.5" fill="#111"/></svg>
<div class="t" style="left:-4.00px;top:119.60px;font-size:12px;color:#1b1b1b;letter-spacing:0.283px;">Outline</div>
<svg class="r" style="left:41px;top:125px;" width="212" height="5" viewBox="0 0 212 5"><g fill="#a3a1b2"><rect x="2" y="0" width="1" height="1"/><rect x="2" y="4" width="1" height="1"/><rect x="0" y="2" width="1" height="1"/><rect x="6" y="0" width="1" height="1"/><rect x="6" y="4" width="1" height="1"/><rect x="4" y="2" width="1" height="1"/><rect x="10" y="0" width="1" height="1"/><rect x="10" y="4" width="1" height="1"/><rect x="8" y="2" width="1" height="1"/><rect x="14" y="0" width="1" height="1"/><rect x="14" y="4" width="1" height="1"/><rect x="12" y="2" width="1" height="1"/><rect x="18" y="0" width="1" height="1"/><rect x="18" y="4" width="1" height="1"/><rect x="16" y="2" width="1" height="1"/><rect x="22" y="0" width="1" height="1"/><rect x="22" y="4" width="1" height="1"/><rect x="20" y="2" width="1" height="1"/><rect x="26" y="0" width="1" height="1"/><rect x="26" y="4" width="1" height="1"/><rect x="24" y="2" width="1" height="1"/><rect x="30" y="0" width="1" height="1"/><rect x="30" y="4" width="1" height="1"/><rect x="28" y="2" width="1" height="1"/><rect x="34" y="0" width="1" height="1"/><rect x="34" y="4" width="1" height="1"/><rect x="32" y="2" width="1" height="1"/><rect x="38" y="0" width="1" height="1"/><rect x="38" y="4" width="1" height="1"/><rect x="36" y="2" width="1" height="1"/><rect x="42" y="0" width="1" height="1"/><rect x="42" y="4" width="1" height="1"/><rect x="40" y="2" width="1" height="1"/><rect x="46" y="0" width="1" height="1"/><rect x="46" y="4" width="1" height="1"/><rect x="44" y="2" width="1" height="1"/><rect x="50" y="0" width="1" height="1"/><rect x="50" y="4" width="1" height="1"/><rect x="48" y="2" width="1" height="1"/><rect x="54" y="0" width="1" height="1"/><rect x="54" y="4" width="1" height="1"/><rect x="52" y="2" width="1" height="1"/><rect x="58" y="0" width="1" height="1"/><rect x="58" y="4" width="1" height="1"/><rect x="56" y="2" width="1" height="1"/><rect x="62" y="0" width="1" height="1"/><rect x="62" y="4" width="1" height="1"/><rect x="60" y="2" width="1" height="1"/><rect x="66" y="0" width="1" height="1"/><rect x="66" y="4" width="1" height="1"/><rect x="64" y="2" width="1" height="1"/><rect x="70" y="0" width="1" height="1"/><rect x="70" y="4" width="1" height="1"/><rect x="68" y="2" width="1" height="1"/><rect x="74" y="0" width="1" height="1"/><rect x="74" y="4" width="1" height="1"/><rect x="72" y="2" width="1" height="1"/><rect x="78" y="0" width="1" height="1"/><rect x="78" y="4" width="1" height="1"/><rect x="76" y="2" width="1" height="1"/><rect x="82" y="0" width="1" height="1"/><rect x="82" y="4" width="1" height="1"/><rect x="80" y="2" width="1" height="1"/><rect x="86" y="0" width="1" height="1"/><rect x="86" y="4" width="1" height="1"/><rect x="84" y="2" width="1" height="1"/><rect x="90" y="0" width="1" height="1"/><rect x="90" y="4" width="1" height="1"/><rect x="88" y="2" width="1" height="1"/><rect x="94" y="0" width="1" height="1"/><rect x="94" y="4" width="1" height="1"/><rect x="92" y="2" width="1" height="1"/><rect x="98" y="0" width="1" height="1"/><rect x="98" y="4" width="1" height="1"/><rect x="96" y="2" width="1" height="1"/><rect x="102" y="0" width="1" height="1"/><rect x="102" y="4" width="1" height="1"/><rect x="100" y="2" width="1" height="1"/><rect x="106" y="0" width="1" height="1"/><rect x="106" y="4" width="1" height="1"/><rect x="104" y="2" width="1" height="1"/><rect x="110" y="0" width="1" height="1"/><rect x="110" y="4" width="1" height="1"/><rect x="108" y="2" width="1" height="1"/><rect x="114" y="0" width="1" height="1"/><rect x="114" y="4" width="1" height="1"/><rect x="112" y="2" width="1" height="1"/><rect x="118" y="0" width="1" height="1"/><rect x="118" y="4" width="1" height="1"/><rect x="116" y="2" width="1" height="1"/><rect x="122" y="0" width="1" height="1"/><rect x="122" y="4" width="1" height="1"/><rect x="120" y="2" width="1" height="1"/><rect x="126" y="0" width="1" height="1"/><rect x="126" y="4" width="1" height="1"/><rect x="124" y="2" width="1" height="1"/><rect x="130" y="0" width="1" height="1"/><rect x="130" y="4" width="1" height="1"/><rect x="128" y="2" width="1" height="1"/><rect x="134" y="0" width="1" height="1"/><rect x="134" y="4" width="1" height="1"/><rect x="132" y="2" width="1" height="1"/><rect x="138" y="0" width="1" height="1"/><rect x="138" y="4" width="1" height="1"/><rect x="136" y="2" width="1" height="1"/><rect x="142" y="0" width="1" height="1"/><rect x="142" y="4" width="1" height="1"/><rect x="140" y="2" width="1" height="1"/><rect x="146" y="0" width="1" height="1"/><rect x="146" y="4" width="1" height="1"/><rect x="144" y="2" width="1" height="1"/><rect x="150" y="0" width="1" height="1"/><rect x="150" y="4" width="1" height="1"/><rect x="148" y="2" width="1" height="1"/><rect x="154" y="0" width="1" height="1"/><rect x="154" y="4" width="1" height="1"/><rect x="152" y="2" width="1" height="1"/><rect x="158" y="0" width="1" height="1"/><rect x="158" y="4" width="1" height="1"/><rect x="156" y="2" width="1" height="1"/><rect x="162" y="0" width="1" height="1"/><rect x="162" y="4" width="1" height="1"/><rect x="160" y="2" width="1" height="1"/><rect x="166" y="0" width="1" height="1"/><rect x="166" y="4" width="1" height="1"/><rect x="164" y="2" width="1" height="1"/><rect x="170" y="0" width="1" height="1"/><rect x="170" y="4" width="1" height="1"/><rect x="168" y="2" width="1" height="1"/><rect x="174" y="0" width="1" height="1"/><rect x="174" y="4" width="1" height="1"/><rect x="172" y="2" width="1" height="1"/><rect x="178" y="0" width="1" height="1"/><rect x="178" y="4" width="1" height="1"/><rect x="176" y="2" width="1" height="1"/><rect x="182" y="0" width="1" height="1"/><rect x="182" y="4" width="1" height="1"/><rect x="180" y="2" width="1" height="1"/><rect x="186" y="0" width="1" height="1"/><rect x="186" y="4" width="1" height="1"/><rect x="184" y="2" width="1" height="1"/><rect x="190" y="0" width="1" height="1"/><rect x="190" y="4" width="1" height="1"/><rect x="188" y="2" width="1" height="1"/><rect x="194" y="0" width="1" height="1"/><rect x="194" y="4" width="1" height="1"/><rect x="192" y="2" width="1" height="1"/><rect x="198" y="0" width="1" height="1"/><rect x="198" y="4" width="1" height="1"/><rect x="196" y="2" width="1" height="1"/><rect x="202" y="0" width="1" height="1"/><rect x="202" y="4" width="1" height="1"/><rect x="200" y="2" width="1" height="1"/><rect x="206" y="0" width="1" height="1"/><rect x="206" y="4" width="1" height="1"/><rect x="204" y="2" width="1" height="1"/><rect x="210" y="0" width="1" height="1"/><rect x="210" y="4" width="1" height="1"/><rect x="208" y="2" width="1" height="1"/></g></svg>
<svg class="r" style="left:258px;top:125.5px;" width="9" height="5" viewBox="0 0 9 5"><polygon points="0,0 9,0 4.5,5" fill="#1a1a1a"/></svg><svg class="r" style="left:274.5px;top:122px;" width="9" height="12" viewBox="0 0 9 12"><path d="M2.5 0.8 H6.2 V6.5 M2.5 0.8 V6.5 M0.5 7 H8 M4.3 7 V11.5" fill="none" stroke="#15152a" stroke-width="1.1"/><path d="M5.7 1 V6.5" stroke="#15152a" stroke-width="1.5"/></svg><svg class="r" style="left:289.5px;top:123px;" width="11" height="10" viewBox="0 0 11 10"><rect x="0.7" y="0.9" width="9.4" height="8.3" fill="none" stroke="#15152a" stroke-width="1.1"/><path d="M0.7 1.3 H10" stroke="#15152a" stroke-width="1.7"/></svg><svg class="r" style="left:306px;top:123px;" width="10" height="10" viewBox="0 0 10 10"><path d="M1 1 L9 9 M9 1 L1 9" stroke="#15152a" stroke-width="1.5"/></svg>
<div class="r" style="left:323px;top:118px;width:1px;height:20px;background:#d9d6e6;"></div>
<svg class="r" style="left:9.5px;top:143px;" width="5" height="18" viewBox="0 0 5 18"><g fill="#a3a1b2"><rect x="0" y="0" width="1" height="1"/><rect x="4" y="0" width="1" height="1"/><rect x="2" y="2" width="1" height="1"/><rect x="0" y="4" width="1" height="1"/><rect x="4" y="4" width="1" height="1"/><rect x="2" y="6" width="1" height="1"/><rect x="0" y="8" width="1" height="1"/><rect x="4" y="8" width="1" height="1"/><rect x="2" y="10" width="1" height="1"/><rect x="0" y="12" width="1" height="1"/><rect x="4" y="12" width="1" height="1"/><rect x="2" y="14" width="1" height="1"/></g></svg>
<div class="r" style="left:22px;top:140px;width:99px;height:23.5px;background:#fffef8;border:1px solid #dcd8ee;box-sizing:border-box"></div>
<div class="t" style="left:25.50px;top:143.60px;font-size:12px;color:#1b1b1b;letter-spacing:-0.377px;">Name</div>
<svg class="r" style="left:108.5px;top:150px;" width="7" height="4" viewBox="0 0 7 4"><polygon points="0,0 7,0 3.5,4" fill="#666"/></svg>
<div class="r" style="left:122px;top:140px;width:90px;height:23.5px;background:#fffef8;border:1px solid #dcd8ee;box-sizing:border-box"></div>
<div class="t" style="left:126.00px;top:143.60px;font-size:12px;color:#a6a6b0;letter-spacing:-0.170px;">Search Outline</div>
<svg class="r" style="left:216px;top:146px;" width="14" height="9" viewBox="0 0 14 9"><path d="M1.5 1.5 L7 7 L12.5 1.5" fill="none" stroke="#c99a13" stroke-width="1.8"/></svg>
<svg class="r" style="left:235.5px;top:155px;" width="6" height="3.5" viewBox="0 0 6 3.5"><polygon points="0,0 6,0 3,3.5" fill="#111"/></svg>
<div class="r" style="left:0px;top:165px;width:324px;height:446px;background:#fffef8;"></div>
<svg class="r" style="left:0px;top:165px;" width="324" height="446" viewBox="0 0 324 446"><g fill="none" stroke="#808080" stroke-width="1" stroke-dasharray="1 1" shape-rendering="crispEdges" transform="translate(0,-165)"><path d="M4.5 180 V184"/><path d="M10 189.5 H20"/><path d="M31.5 196 V376"/><path d="M36 205.5 H45"/><path d="M36 269.5 H45"/><path d="M36 333.5 H45"/><path d="M36 349.5 H45"/><path d="M32 365.5 H45"/><path d="M36 381.5 H45"/><path d="M58.5 212 V252"/><path d="M58 221.5 H72"/><path d="M58 237.5 H72"/><path d="M58 253.5 H72"/><path d="M58.5 276 V316"/><path d="M58 285.5 H72"/><path d="M58 301.5 H72"/><path d="M58 317.5 H72"/><path d="M58.5 388 V504"/><path d="M64 397.5 H72"/><path d="M64 509.5 H72"/><path d="M58 429.5 H72"/><path d="M58 445.5 H72"/><path d="M58 461.5 H72"/><path d="M58 477.5 H72"/><path d="M58 493.5 H72"/><path d="M85.5 404 V412"/><path d="M86 413.5 H99"/><path d="M85.5 516 V540"/><path d="M86 525.5 H99"/><path d="M86 541.5 H99"/></g></svg>
<svg class="r" style="left:1px;top:166px;" width="13" height="14" viewBox="0 0 13 14"><rect x="0.6" y="0.8" width="12.6" height="12.4" rx="1" fill="#fbfbf6" stroke="#3d3d3d" stroke-width="0.9"/><rect x="3.6" y="0.8" width="9.6" height="12.4" fill="#c9991a" stroke="#3d2f0a" stroke-width="0.9"/><path d="M1.2 3 H3 M1.2 5 H3 M1.2 7 H3 M1.2 9 H3 M1.2 11 H3" stroke="#9a9a9a" stroke-width="0.7"/></svg>
<div class="t" style="left:21.30px;top:164.50px;font-size:11.8px;color:#000;font-weight:bold;letter-spacing:0.301px;">Project*</div>
<svg class="r" style="left:0px;top:184.5px;" width="9" height="9" viewBox="0 0 9 9"><rect x="0.5" y="0.5" width="8" height="8" fill="#fffef8" stroke="#8c8c8c"/><path d="M2.5 4.5 H6.5" stroke="#000"/></svg>
<svg class="r" style="left:28px;top:181px;" width="15" height="15" viewBox="0 0 15 15"><path d="M1 2 H8 V4 H14 V6 H1 Z" fill="#b8891c" stroke="#6b5010" stroke-width="0.8"/><rect x="1" y="5" width="13" height="9" fill="#f4e7a6" stroke="#6b5010" stroke-width="0.9"/><path d="M7.5 7 L10.5 8.2 V11.5 L7.5 13 L4.5 11.5 V8.2 Z" fill="#8ab4e8" stroke="#1c3f7a" stroke-width="0.7"/></svg>
<div class="t" style="left:48.50px;top:180.50px;font-size:11.8px;color:#000;font-weight:bold;letter-spacing:0.089px;">Model (A4)</div>
<svg class="r" style="left:27px;top:200.5px;" width="9" height="9" viewBox="0 0 9 9"><rect x="0.5" y="0.5" width="8" height="8" fill="#fffef8" stroke="#8c8c8c"/><path d="M2.5 4.5 H6.5" stroke="#000"/></svg>
<svg class="r" style="left:45px;top:203.5px;" width="10" height="10" viewBox="0 0 10 10"><path d="M1 5.4 L3.2 8 L8.4 1.4" fill="none" stroke="#0a7f0e" stroke-width="1.7"/></svg>
<svg class="r" style="left:55px;top:197.5px;" width="15" height="13" viewBox="0 0 15 13"><path d="M1 3.6 L4.2 2 L8 3.6 V8 L4.6 9.6 L1 8 Z" fill="#c8dcf7" stroke="#1c3f7a" stroke-width="0.8"/><path d="M1 3.6 L4.6 5.2 L8 3.6 M4.6 5.2 V9.6" fill="none" stroke="#1c3f7a" stroke-width="0.7"/><path d="M6.3 5.2 L9.8 3.4 L14 5.2 V10 L10.3 11.8 L6.3 10 Z" fill="#6aa2ea" stroke="#1c3f7a" stroke-width="0.8"/><path d="M6.6 5.5 L10.3 7.1 V11.4 L6.6 9.8 Z" fill="#eef4fd"/><path d="M6.6 5.3 L9.8 3.8 L13.7 5.3 L10.3 6.9 Z" fill="#c8dcf7"/><path d="M6.3 5.2 L10.3 7 L14 5.2 M10.3 7 V11.8" fill="none" stroke="#1c3f7a" stroke-width="0.7"/></svg>
<div class="t" style="left:74.70px;top:196.50px;font-size:11px;color:#000;letter-spacing:-0.236px;-webkit-text-stroke:0;">Geometry</div>
<svg class="r" style="left:72px;top:219px;" width="10" height="10" viewBox="0 0 10 10"><path d="M0.8 5.2 L3 8.4 L8.6 1" fill="none" stroke="#0f8a12" stroke-width="1.7"/><path d="M3.5 4 L9 9 M9 4.2 L4.5 9" stroke="#0f7a10" stroke-width="1.3"/></svg>
<svg class="r" style="left:84px;top:215.8px;" width="11" height="11" viewBox="0 0 11 11"><path d="M5.5 0.8 L10 2.8 V8 L5.5 10.2 L1 8 V2.8 Z" fill="#6aa2ea" stroke="#1c3f7a" stroke-width="0.9"/><path d="M1.3 3 L5.5 4.9 V9.8 L1.3 7.8 Z" fill="#eef4fd"/><path d="M1.3 2.9 L5.5 1.1 L9.7 2.9 L5.5 4.8 Z" fill="#c8dcf7"/><path d="M1 2.8 L5.5 4.9 L10 2.8 M5.5 4.9 V10.2" fill="none" stroke="#1c3f7a" stroke-width="0.8"/></svg>
<div class="t" style="left:101.70px;top:212.50px;font-size:11px;color:#000;letter-spacing:-0.592px;-webkit-text-stroke:0;">Solid</div>
<svg class="r" style="left:72px;top:235px;" width="10" height="10" viewBox="0 0 10 10"><path d="M0.8 5.2 L3 8.4 L8.6 1" fill="none" stroke="#0f8a12" stroke-width="1.7"/><path d="M3.5 4 L9 9 M9 4.2 L4.5 9" stroke="#0f7a10" stroke-width="1.3"/></svg>
<svg class="r" style="left:84px;top:231.8px;" width="11" height="11" viewBox="0 0 11 11"><path d="M5.5 0.8 L10 2.8 V8 L5.5 10.2 L1 8 V2.8 Z" fill="#6aa2ea" stroke="#1c3f7a" stroke-width="0.9"/><path d="M1.3 3 L5.5 4.9 V9.8 L1.3 7.8 Z" fill="#eef4fd"/><path d="M1.3 2.9 L5.5 1.1 L9.7 2.9 L5.5 4.8 Z" fill="#c8dcf7"/><path d="M1 2.8 L5.5 4.9 L10 2.8 M5.5 4.9 V10.2" fill="none" stroke="#1c3f7a" stroke-width="0.8"/></svg>
<div class="t" style="left:101.70px;top:228.50px;font-size:11px;color:#000;letter-spacing:-0.592px;-webkit-text-stroke:0;">Solid</div>
<svg class="r" style="left:72px;top:251px;" width="10" height="10" viewBox="0 0 10 10"><path d="M0.8 5.2 L3 8.4 L8.6 1" fill="none" stroke="#0f8a12" stroke-width="1.7"/><path d="M3.5 4 L9 9 M9 4.2 L4.5 9" stroke="#0f7a10" stroke-width="1.3"/></svg>
<svg class="r" style="left:84px;top:247.8px;" width="11" height="11" viewBox="0 0 11 11"><path d="M5.5 0.8 L10 2.8 V8 L5.5 10.2 L1 8 V2.8 Z" fill="#6aa2ea" stroke="#1c3f7a" stroke-width="0.9"/><path d="M1.3 3 L5.5 4.9 V9.8 L1.3 7.8 Z" fill="#eef4fd"/><path d="M1.3 2.9 L5.5 1.1 L9.7 2.9 L5.5 4.8 Z" fill="#c8dcf7"/><path d="M1 2.8 L5.5 4.9 L10 2.8 M5.5 4.9 V10.2" fill="none" stroke="#1c3f7a" stroke-width="0.8"/></svg>
<div class="t" style="left:101.70px;top:244.50px;font-size:11px;color:#000;letter-spacing:-0.592px;-webkit-text-stroke:0;">Solid</div>
<svg class="r" style="left:27px;top:264.5px;" width="9" height="9" viewBox="0 0 9 9"><rect x="0.5" y="0.5" width="8" height="8" fill="#fffef8" stroke="#8c8c8c"/><path d="M2.5 4.5 H6.5" stroke="#000"/></svg>
<svg class="r" style="left:45px;top:267.5px;" width="10" height="10" viewBox="0 0 10 10"><path d="M1 5.4 L3.2 8 L8.4 1.4" fill="none" stroke="#0a7f0e" stroke-width="1.7"/></svg>
<svg class="r" style="left:55px;top:261px;" width="15" height="15" viewBox="0 0 15 15"><path d="M1 2 H8 V4 H14 V6 H1 Z" fill="#b8891c" stroke="#6b5010" stroke-width="0.8"/><rect x="1" y="5" width="13" height="9" fill="#f4e7a6" stroke="#6b5010" stroke-width="0.9"/><path d="M5 8 L8 7 L12 11 L9.5 13 Z" fill="#f2b2b2" stroke="#555" stroke-width="0.6"/></svg>
<div class="t" style="left:74.70px;top:260.50px;font-size:11px;color:#000;letter-spacing:-0.225px;-webkit-text-stroke:0;">Materials</div>
<svg class="r" style="left:72px;top:283.5px;" width="10" height="10" viewBox="0 0 10 10"><path d="M1 5.4 L3.2 8 L8.4 1.4" fill="none" stroke="#0a7f0e" stroke-width="1.7"/></svg>
<svg class="r" style="left:82px;top:276.5px;" width="15" height="15" viewBox="0 0 15 15"><path d="M2.5 3 L6.5 1 L13.5 9 L9.5 13.5 L2 5.5 Z" fill="#fffef8" stroke="#555" stroke-width="0.9"/><path d="M6.5 5.5 L11.5 10 L9.5 12.2 L5 7.5 Z" fill="#f2b2b2"/><circle cx="4.6" cy="4" r="1" fill="none" stroke="#555" stroke-width="0.7"/></svg>
<div class="t" style="left:101.70px;top:276.50px;font-size:11px;color:#000;letter-spacing:-0.094px;-webkit-text-stroke:0;">Structural Steel</div>
<svg class="r" style="left:72px;top:299.5px;" width="10" height="10" viewBox="0 0 10 10"><path d="M1 5.4 L3.2 8 L8.4 1.4" fill="none" stroke="#0a7f0e" stroke-width="1.7"/></svg>
<svg class="r" style="left:82px;top:292.5px;" width="15" height="15" viewBox="0 0 15 15"><path d="M2.5 3 L6.5 1 L13.5 9 L9.5 13.5 L2 5.5 Z" fill="#fffef8" stroke="#555" stroke-width="0.9"/><path d="M6.5 5.5 L11.5 10 L9.5 12.2 L5 7.5 Z" fill="#f2b2b2"/><circle cx="4.6" cy="4" r="1" fill="none" stroke="#555" stroke-width="0.7"/></svg>
<div class="t" style="left:101.70px;top:292.50px;font-size:11px;color:#000;letter-spacing:-0.131px;-webkit-text-stroke:0;">Tungsten carbide</div>
<svg class="r" style="left:72px;top:315.5px;" width="10" height="10" viewBox="0 0 10 10"><path d="M1 5.4 L3.2 8 L8.4 1.4" fill="none" stroke="#0a7f0e" stroke-width="1.7"/></svg>
<svg class="r" style="left:82px;top:308.5px;" width="15" height="15" viewBox="0 0 15 15"><path d="M2.5 3 L6.5 1 L13.5 9 L9.5 13.5 L2 5.5 Z" fill="#fffef8" stroke="#555" stroke-width="0.9"/><path d="M6.5 5.5 L11.5 10 L9.5 12.2 L5 7.5 Z" fill="#f2b2b2"/><circle cx="4.6" cy="4" r="1" fill="none" stroke="#555" stroke-width="0.7"/></svg>
<div class="t" style="left:101.70px;top:308.50px;font-size:11px;color:#000;letter-spacing:-0.082px;-webkit-text-stroke:0;">Titanium alloy, Ti-6Al-4V, annealed</div>
<svg class="r" style="left:27px;top:328.5px;" width="9" height="9" viewBox="0 0 9 9"><rect x="0.5" y="0.5" width="8" height="8" fill="#fffef8" stroke="#8c8c8c"/><path d="M2.5 4.5 H6.5" stroke="#000"/><path d="M4.5 2.5 V6.5" stroke="#000"/></svg>
<svg class="r" style="left:45px;top:331.5px;" width="10" height="10" viewBox="0 0 10 10"><path d="M1 5.4 L3.2 8 L8.4 1.4" fill="none" stroke="#0a7f0e" stroke-width="1.7"/></svg>
<svg class="r" style="left:55px;top:324.5px;" width="15" height="15" viewBox="0 0 15 15"><path d="M7.5 8 V1.5 M7.5 8 L2 13 M7.5 8 L13.5 12.5" stroke="#333" stroke-width="0.9"/><path d="M7.5 0.5 L9.2 3.5 H5.8 Z" fill="#18b0a8"/><path d="M1 14 L1.8 10.8 L4.2 13 Z" fill="#2a58d8"/><path d="M14.5 13.5 L11.2 13 L12.8 10.5 Z" fill="#d82020"/><path d="M4 5 L11 10 M11 5 L4 10" stroke="#777" stroke-width="0.7"/></svg>
<div class="t" style="left:74.70px;top:324.50px;font-size:11px;color:#000;letter-spacing:-0.208px;-webkit-text-stroke:0;">Coordinate Systems</div>
<svg class="r" style="left:27px;top:344.5px;" width="9" height="9" viewBox="0 0 9 9"><rect x="0.5" y="0.5" width="8" height="8" fill="#fffef8" stroke="#8c8c8c"/><path d="M2.5 4.5 H6.5" stroke="#000"/><path d="M4.5 2.5 V6.5" stroke="#000"/></svg>
<svg class="r" style="left:45px;top:347.5px;" width="10" height="10" viewBox="0 0 10 10"><path d="M1 5.4 L3.2 8 L8.4 1.4" fill="none" stroke="#0a7f0e" stroke-width="1.7"/></svg>
<svg class="r" style="left:55px;top:341px;" width="15" height="15" viewBox="0 0 15 15"><path d="M1 2 H8 V4 H14 V6 H1 Z" fill="#b8891c" stroke="#6b5010" stroke-width="0.8"/><rect x="1" y="5" width="13" height="9" fill="#f4e7a6" stroke="#6b5010" stroke-width="0.9"/><ellipse cx="7.5" cy="9.8" rx="3.6" ry="2.3" fill="#caa030" stroke="#5c4710" stroke-width="0.6"/><path d="M5 9.8 H10" stroke="#5c4710" stroke-width="0.6"/></svg>
<div class="t" style="left:74.70px;top:340.50px;font-size:11px;color:#000;letter-spacing:-0.259px;-webkit-text-stroke:0;">Connections</div>
<svg class="r" style="left:45px;top:363.5px;" width="10" height="10" viewBox="0 0 10 10"><path d="M1 5.4 L3.2 8 L8.4 1.4" fill="none" stroke="#0a7f0e" stroke-width="1.7"/></svg>
<svg class="r" style="left:55px;top:357.5px;" width="15" height="13" viewBox="0 0 15 13"><path d="M1 3.5 L5 1.5 H14 V8 L10 11 H1 Z" fill="#dfe6f0" stroke="#44546a" stroke-width="0.9"/><path d="M1 3.5 H10 V11 M10 3.5 L14 1.5 M5.5 3.5 V11 M1 7.2 H10 M10 7.2 L14 4.8 M5.5 3.5 L9.5 1.5" fill="none" stroke="#44546a" stroke-width="0.7"/></svg>
<div class="t" style="left:74.70px;top:356.50px;font-size:11px;color:#000;letter-spacing:-0.650px;-webkit-text-stroke:0;">Mesh</div>
<svg class="r" style="left:27px;top:376.5px;" width="9" height="9" viewBox="0 0 9 9"><rect x="0.5" y="0.5" width="8" height="8" fill="#fffef8" stroke="#8c8c8c"/><path d="M2.5 4.5 H6.5" stroke="#000"/></svg>
<svg class="r" style="left:45px;top:376.5px;" width="11" height="13" viewBox="0 0 11 13"><path d="M5.8 0.4 H9.4 L6.2 4.4 H9.2 L1.4 10.2 L4.2 6.2 H1.6 Z" fill="#27b81d" stroke="#0a2608" stroke-width="0.8" stroke-linejoin="round"/><path d="M1 11.6 q0.9 -1.4 1.8 0 t1.8 0 t1.8 0" fill="none" stroke="#1a1a1a" stroke-width="0.9"/></svg>
<svg class="r" style="left:55px;top:372.5px;" width="15" height="16" viewBox="0 0 15 16"><rect x="0.5" y="0.5" width="14" height="15" fill="#79c84f" stroke="#a8dc8c" stroke-width="0.9"/><path d="M2 3 H12 M3 5.5 L4.5 3 M6 5.5 L7.5 3 M9 5.5 L10.5 3" stroke="#fff" stroke-width="0.9"/><rect x="7" y="8" width="7" height="7" rx="1.2" fill="#3f86e8"/><path d="M10.3 9.4 V12 H12.6" stroke="#fff" stroke-width="1" fill="none"/></svg>
<div class="t" style="left:74.70px;top:372.50px;font-size:11.8px;color:#000;font-weight:bold;letter-spacing:0.258px;-webkit-text-stroke:0;">Transient (A5)</div>
<svg class="r" style="left:54px;top:392.5px;" width="9" height="9" viewBox="0 0 9 9"><rect x="0.5" y="0.5" width="8" height="8" fill="#fffef8" stroke="#8c8c8c"/><path d="M2.5 4.5 H6.5" stroke="#000"/></svg>
<svg class="r" style="left:72px;top:395.5px;" width="10" height="10" viewBox="0 0 10 10"><path d="M1 5.4 L3.2 8 L8.4 1.4" fill="none" stroke="#0a7f0e" stroke-width="1.7"/></svg>
<svg class="r" style="left:82px;top:388.5px;" width="16" height="16" viewBox="0 0 16 16"><path d="M1.5 3.5 Q1.5 1 4 1 H7 L9 3 H14.5 V14.5 H1.5 Z" fill="#f7e88c" stroke="#4a3a10" stroke-width="0.9"/><path d="M3.5 5.3 H12 M10 3.6 L12.6 5.3 L10 7" stroke="#e0441a" stroke-width="1" fill="none"/><text x="8" y="13.3" font-size="7.6" font-weight="bold" fill="#111" text-anchor="middle" font-family="Liberation Sans" textLength="12" lengthAdjust="spacingAndGlyphs">T=0</text></svg>
<div class="t" style="left:101.70px;top:388.50px;font-size:11px;color:#000;letter-spacing:-0.117px;-webkit-text-stroke:0;">Initial Conditions</div>
<svg class="r" style="left:99px;top:411.5px;" width="10" height="10" viewBox="0 0 10 10"><path d="M1 5.4 L3.2 8 L8.4 1.4" fill="none" stroke="#0a7f0e" stroke-width="1.7"/></svg>
<svg class="r" style="left:109px;top:404.5px;" width="16" height="15" viewBox="0 0 16 15"><path d="M1 3.5 H14 M11.5 1.5 L14.5 3.5 L11.5 5.5" stroke="#d9a520" stroke-width="1" fill="none"/><text x="8" y="13" font-size="7.5" font-weight="bold" fill="#333" text-anchor="middle" font-family="Liberation Sans">T=0</text></svg>
<div class="t" style="left:128.40px;top:404.50px;font-size:11px;color:#000;letter-spacing:-0.212px;-webkit-text-stroke:0;">Modal (None)</div>
<svg class="r" style="left:72px;top:427.5px;" width="10" height="10" viewBox="0 0 10 10"><path d="M1 5.4 L3.2 8 L8.4 1.4" fill="none" stroke="#0a7f0e" stroke-width="1.7"/></svg>
<svg class="r" style="left:82px;top:420.5px;" width="16" height="16" viewBox="0 0 16 16"><path d="M2.5 1 V13 M7.5 1 V13 M12.5 1 V13 M1 3 H14 M1 7 H14" stroke="#1a2a9a" stroke-width="1" fill="none"/><path d="M1 13 Q7.5 2 14 13" stroke="#18a018" stroke-width="1.1" fill="none"/><path d="M1 13.5 L2.5 15.5 L4 13.5 M6 13.5 L7.5 15.5 L9 13.5 M11 13.5 L12.5 15.5 L14 13.5" stroke="#d82020" stroke-width="0.9" fill="none"/></svg>
<div class="t" style="left:101.70px;top:420.50px;font-size:11px;color:#000;letter-spacing:-0.180px;-webkit-text-stroke:0;">Analysis Settings</div>
<svg class="r" style="left:72px;top:443.5px;" width="10" height="10" viewBox="0 0 10 10"><path d="M1 5.4 L3.2 8 L8.4 1.4" fill="none" stroke="#0a7f0e" stroke-width="1.7"/></svg>
<svg class="r" style="left:82.5px;top:437.5px;" width="11" height="11" viewBox="0 0 11 11"><path d="M5.5 0.8 L10 2.8 V8 L5.5 10.2 L1 8 V2.8 Z" fill="#fbfbf8" stroke="#3a3a3a" stroke-width="0.9"/><path d="M5.8 5.1 L9.7 3.3 V7.8 L5.8 9.7 Z" fill="#1f7ce4"/><path d="M1 2.8 L5.5 4.9 L10 2.8 M5.5 4.9 V10.2" fill="none" stroke="#3a3a3a" stroke-width="0.8"/></svg><svg class="r" style="left:88px;top:442.5px;" width="10" height="9" viewBox="0 0 10 9"><path d="M1.5 3 A3.6 3.2 0 1 1 3.5 7.5" fill="none" stroke="#e09a10" stroke-width="1.1"/><path d="M0.5 1.5 L3.2 2 L1.5 4.4 Z" fill="#e09a10"/></svg>
<div class="t" style="left:101.70px;top:436.50px;font-size:11px;color:#000;letter-spacing:-0.110px;-webkit-text-stroke:0;">Rotational Velocity</div>
<svg class="r" style="left:72px;top:459.5px;" width="10" height="10" viewBox="0 0 10 10"><path d="M1 5.4 L3.2 8 L8.4 1.4" fill="none" stroke="#0a7f0e" stroke-width="1.7"/></svg>
<svg class="r" style="left:82.5px;top:455.5px;" width="11" height="11" viewBox="0 0 11 11"><path d="M5.5 0.8 L10 2.8 V8 L5.5 10.2 L1 8 V2.8 Z" fill="#fbfbf8" stroke="#3a3a3a" stroke-width="0.9"/><path d="M5.8 5.1 L9.7 3.3 V7.8 L5.8 9.7 Z" fill="#1f7ce4"/><path d="M1 2.8 L5.5 4.9 L10 2.8 M5.5 4.9 V10.2" fill="none" stroke="#3a3a3a" stroke-width="0.8"/></svg><svg class="r" style="left:88px;top:454.5px;" width="10" height="12" viewBox="0 0 10 12"><path d="M0 7.5 H8" stroke="#e01010" stroke-width="1.3"/><path d="M6 5 L9.5 7.5 L6 10 Z" fill="#e01010"/><text x="5" y="3.6" font-size="4.5" fill="#333" font-family="Liberation Sans">V</text></svg>
<div class="t" style="left:101.70px;top:452.50px;font-size:11px;color:#000;letter-spacing:-0.201px;-webkit-text-stroke:0;">Velocity</div>
<svg class="r" style="left:72px;top:475.5px;" width="10" height="10" viewBox="0 0 10 10"><path d="M1 5.4 L3.2 8 L8.4 1.4" fill="none" stroke="#0a7f0e" stroke-width="1.7"/></svg>
<svg class="r" style="left:82.5px;top:469.5px;" width="11" height="11" viewBox="0 0 11 11"><path d="M5.5 0.8 L10 2.8 V8 L5.5 10.2 L1 8 V2.8 Z" fill="#fbfbf8" stroke="#3a3a3a" stroke-width="0.9"/><path d="M5.8 5.1 L9.7 3.3 V7.8 L5.8 9.7 Z" fill="#1f7ce4"/><path d="M1 2.8 L5.5 4.9 L10 2.8 M5.5 4.9 V10.2" fill="none" stroke="#3a3a3a" stroke-width="0.8"/></svg><svg class="r" style="left:89px;top:478.5px;" width="9" height="6" viewBox="0 0 9 6"><path d="M8 0.8 L2 4" stroke="#e0a010" stroke-width="1.2"/><path d="M0.5 5 L2 1.8 L4 4.5 Z" fill="#e0a010"/></svg>
<div class="t" style="left:101.70px;top:468.50px;font-size:11px;color:#000;letter-spacing:-0.303px;-webkit-text-stroke:0;">Displacement</div>
<svg class="r" style="left:72px;top:491.5px;" width="10" height="10" viewBox="0 0 10 10"><path d="M1 5.4 L3.2 8 L8.4 1.4" fill="none" stroke="#0a7f0e" stroke-width="1.7"/></svg>
<svg class="r" style="left:82.5px;top:485.5px;" width="11" height="11" viewBox="0 0 11 11"><path d="M5.5 0.8 L10 2.8 V8 L5.5 10.2 L1 8 V2.8 Z" fill="#fbfbf8" stroke="#3a3a3a" stroke-width="0.9"/><path d="M5.8 5.1 L9.7 3.3 V7.8 L5.8 9.7 Z" fill="#1f7ce4"/><path d="M1 2.8 L5.5 4.9 L10 2.8 M5.5 4.9 V10.2" fill="none" stroke="#3a3a3a" stroke-width="0.8"/></svg><svg class="r" style="left:88px;top:494.5px;" width="10" height="6" viewBox="0 0 10 6"><path d="M1 5.5 L5 1 M4.5 5.5 L8.5 1" stroke="#e0a010" stroke-width="1.2"/></svg>
<div class="t" style="left:101.70px;top:484.50px;font-size:11px;color:#000;letter-spacing:-0.122px;-webkit-text-stroke:0;">Fixed Support</div>
<svg class="r" style="left:54px;top:504.5px;" width="9" height="9" viewBox="0 0 9 9"><rect x="0.5" y="0.5" width="8" height="8" fill="#fffef8" stroke="#8c8c8c"/><path d="M2.5 4.5 H6.5" stroke="#000"/></svg>
<svg class="r" style="left:72px;top:504.5px;" width="11" height="13" viewBox="0 0 11 13"><path d="M5.8 0.4 H9.4 L6.2 4.4 H9.2 L1.4 10.2 L4.2 6.2 H1.6 Z" fill="#27b81d" stroke="#0a2608" stroke-width="0.8" stroke-linejoin="round"/><path d="M1 11.6 q0.9 -1.4 1.8 0 t1.8 0 t1.8 0" fill="none" stroke="#1a1a1a" stroke-width="0.9"/></svg>
<svg class="r" style="left:82px;top:501px;" width="15" height="15" viewBox="0 0 15 15"><path d="M1 2 H8 V4 H14 V6 H1 Z" fill="#b8891c" stroke="#6b5010" stroke-width="0.8"/><rect x="1" y="5" width="13" height="9" fill="#f4e7a6" stroke="#6b5010" stroke-width="0.9"/><path d="M7.5 7 L11 8.5 V11.5 L7.5 13.2 L4 11.5 V8.5 Z" fill="#3aa0e0" stroke="#444" stroke-width="0.5"/><path d="M4 8.5 L7.5 10 V13.2 L4 11.5 Z" fill="#e03030"/><path d="M7.5 10 L11 8.5 V11.5 L7.5 13.2 Z" fill="#30c040"/></svg>
<div class="t" style="left:101.70px;top:500.50px;font-size:11.8px;color:#000;font-weight:bold;letter-spacing:0.061px;-webkit-text-stroke:0;">Solution (A6)</div>
<svg class="r" style="left:99px;top:520.5px;" width="11" height="13" viewBox="0 0 11 13"><path d="M5.8 0.4 H9.4 L6.2 4.4 H9.2 L1.4 10.2 L4.2 6.2 H1.6 Z" fill="#27b81d" stroke="#0a2608" stroke-width="0.8" stroke-linejoin="round"/><path d="M1 11.6 q0.9 -1.4 1.8 0 t1.8 0 t1.8 0" fill="none" stroke="#1a1a1a" stroke-width="0.9"/></svg>
<svg class="r" style="left:109px;top:517px;" width="15" height="15" viewBox="0 0 15 15"><path d="M1 2 H8 V4 H14 V6 H1 Z" fill="#b8891c" stroke="#6b5010" stroke-width="0.8"/><rect x="1" y="5" width="13" height="9" fill="#f4e7a6" stroke="#6b5010" stroke-width="0.9"/><rect x="6.3" y="8" width="2.2" height="5" fill="#2f7ad8"/><rect x="6.3" y="6" width="2.2" height="1.4" fill="#2f7ad8"/></svg>
<div class="t" style="left:128.40px;top:516.50px;font-size:11px;color:#000;letter-spacing:-0.052px;-webkit-text-stroke:0;">Solution Information</div>
<svg class="r" style="left:99px;top:536.5px;" width="11" height="13" viewBox="0 0 11 13"><path d="M5.8 0.4 H9.4 L6.2 4.4 H9.2 L1.4 10.2 L4.2 6.2 H1.6 Z" fill="#27b81d" stroke="#0a2608" stroke-width="0.8" stroke-linejoin="round"/><path d="M1 11.6 q0.9 -1.4 1.8 0 t1.8 0 t1.8 0" fill="none" stroke="#1a1a1a" stroke-width="0.9"/></svg>
<svg class="r" style="left:109px;top:533.5px;" width="16" height="14" viewBox="0 0 16 14"><path d="M1 4 L4.5 2 L8 4 V9.5 L4.5 11.5 L1 9.5 Z" fill="#3a90e0" stroke="#333" stroke-width="0.7"/><path d="M1 4 L4.5 2 L8 4 L4.5 6 Z" fill="#30c8c0"/><path d="M6 4.5 L10.5 2.5 L15 4.5 V11 L10.5 13.5 L6 11 Z" fill="#f0d020" stroke="#333" stroke-width="0.7"/><path d="M6 4.5 L10.5 6.8 V13.5 L6 11 Z" fill="#40c040"/><path d="M10.5 6.8 L15 4.5 V11 L10.5 13.5 Z" fill="#e03020"/><path d="M6 4.5 L10.5 2.5 L15 4.5 L10.5 6.8 Z" fill="#f0a020"/></svg>
<div class="t" style="left:128.40px;top:532.50px;font-size:11px;color:#000;letter-spacing:-0.036px;-webkit-text-stroke:0;">Total Deformation</div>
<div class="r" style="left:0px;top:615.5px;width:324px;height:1px;background:#e0ddec;"></div>
<div class="t" style="left:-4.50px;top:616.60px;font-size:12px;color:#1b1b1b;letter-spacing:0.053px;">Details of "Total Deformation"</div>
<svg class="r" style="left:158px;top:622px;" width="96" height="5" viewBox="0 0 96 5"><g fill="#a3a1b2"><rect x="2" y="0" width="1" height="1"/><rect x="2" y="4" width="1" height="1"/><rect x="0" y="2" width="1" height="1"/><rect x="6" y="0" width="1" height="1"/><rect x="6" y="4" width="1" height="1"/><rect x="4" y="2" width="1" height="1"/><rect x="10" y="0" width="1" height="1"/><rect x="10" y="4" width="1" height="1"/><rect x="8" y="2" width="1" height="1"/><rect x="14" y="0" width="1" height="1"/><rect x="14" y="4" width="1" height="1"/><rect x="12" y="2" width="1" height="1"/><rect x="18" y="0" width="1" height="1"/><rect x="18" y="4" width="1" height="1"/><rect x="16" y="2" width="1" height="1"/><rect x="22" y="0" width="1" height="1"/><rect x="22" y="4" width="1" height="1"/><rect x="20" y="2" width="1" height="1"/><rect x="26" y="0" width="1" height="1"/><rect x="26" y="4" width="1" height="1"/><rect x="24" y="2" width="1" height="1"/><rect x="30" y="0" width="1" height="1"/><rect x="30" y="4" width="1" height="1"/><rect x="28" y="2" width="1" height="1"/><rect x="34" y="0" width="1" height="1"/><rect x="34" y="4" width="1" height="1"/><rect x="32" y="2" width="1" height="1"/><rect x="38" y="0" width="1" height="1"/><rect x="38" y="4" width="1" height="1"/><rect x="36" y="2" width="1" height="1"/><rect x="42" y="0" width="1" height="1"/><rect x="42" y="4" width="1" height="1"/><rect x="40" y="2" width="1" height="1"/><rect x="46" y="0" width="1" height="1"/><rect x="46" y="4" width="1" height="1"/><rect x="44" y="2" width="1" height="1"/><rect x="50" y="0" width="1" height="1"/><rect x="50" y="4" width="1" height="1"/><rect x="48" y="2" width="1" height="1"/><rect x="54" y="0" width="1" height="1"/><rect x="54" y="4" width="1" height="1"/><rect x="52" y="2" width="1" height="1"/><rect x="58" y="0" width="1" height="1"/><rect x="58" y="4" width="1" height="1"/><rect x="56" y="2" width="1" height="1"/><rect x="62" y="0" width="1" height="1"/><rect x="62" y="4" width="1" height="1"/><rect x="60" y="2" width="1" height="1"/><rect x="66" y="0" width="1" height="1"/><rect x="66" y="4" width="1" height="1"/><rect x="64" y="2" width="1" height="1"/><rect x="70" y="0" width="1" height="1"/><rect x="70" y="4" width="1" height="1"/><rect x="68" y="2" width="1" height="1"/><rect x="74" y="0" width="1" height="1"/><rect x="74" y="4" width="1" height="1"/><rect x="72" y="2" width="1" height="1"/><rect x="78" y="0" width="1" height="1"/><rect x="78" y="4" width="1" height="1"/><rect x="76" y="2" width="1" height="1"/><rect x="82" y="0" width="1" height="1"/><rect x="82" y="4" width="1" height="1"/><rect x="80" y="2" width="1" height="1"/><rect x="86" y="0" width="1" height="1"/><rect x="86" y="4" width="1" height="1"/><rect x="84" y="2" width="1" height="1"/><rect x="90" y="0" width="1" height="1"/><rect x="90" y="4" width="1" height="1"/><rect x="88" y="2" width="1" height="1"/><rect x="94" y="0" width="1" height="1"/><rect x="94" y="4" width="1" height="1"/><rect x="92" y="2" width="1" height="1"/></g></svg>
<svg class="r" style="left:258px;top:622.5px;" width="9" height="5" viewBox="0 0 9 5"><polygon points="0,0 9,0 4.5,5" fill="#1a1a1a"/></svg><svg class="r" style="left:274.5px;top:619px;" width="9" height="12" viewBox="0 0 9 12"><path d="M2.5 0.8 H6.2 V6.5 M2.5 0.8 V6.5 M0.5 7 H8 M4.3 7 V11.5" fill="none" stroke="#15152a" stroke-width="1.1"/><path d="M5.7 1 V6.5" stroke="#15152a" stroke-width="1.5"/></svg><svg class="r" style="left:289.5px;top:620px;" width="11" height="10" viewBox="0 0 11 10"><rect x="0.7" y="0.9" width="9.4" height="8.3" fill="none" stroke="#15152a" stroke-width="1.1"/><path d="M0.7 1.3 H10" stroke="#15152a" stroke-width="1.7"/></svg><svg class="r" style="left:306px;top:620px;" width="10" height="10" viewBox="0 0 10 10"><path d="M1 1 L9 9 M9 1 L1 9" stroke="#15152a" stroke-width="1.5"/></svg>
<div class="r" style="left:323px;top:616px;width:1px;height:19px;background:#e0ddec;"></div>
<div class="r" style="left:0px;top:635px;width:324px;height:309.5px;background:#fffef8;"></div>
<div class="t" style="left:9.30px;top:636.40px;font-size:11.5px;color:#000;font-weight:bold;letter-spacing:-0.702px;">Scope</div>
<svg class="r" style="left:-6.5px;top:640px;" width="9" height="9" viewBox="0 0 9 9"><rect x="0.5" y="0.5" width="8" height="8" fill="#fffef8" stroke="#9a9a9a"/><path d="M2.5 4.5 H6.5" stroke="#333"/></svg>
<div class="r" style="left:126.5px;top:653px;width:197px;height:18px;background:#ecefe6;"></div>
<div class="t" style="left:9.30px;top:654.40px;font-size:11.5px;color:#000;letter-spacing:0.135px;">Scoping Method</div>
<div class="t" style="left:130.00px;top:654.40px;font-size:11.5px;color:#000;letter-spacing:-0.138px;">Geometry Selection</div>
<div class="r" style="left:126.5px;top:671px;width:197px;height:18px;background:#ecefe6;"></div>
<div class="t" style="left:9.30px;top:672.40px;font-size:11.5px;color:#000;letter-spacing:-0.248px;">Geometry</div>
<div class="t" style="left:130.00px;top:672.40px;font-size:11.5px;color:#000;letter-spacing:-0.164px;">All Bodies</div>
<div class="t" style="left:9.30px;top:690.40px;font-size:11.5px;color:#000;font-weight:bold;letter-spacing:-0.152px;">Definition</div>
<svg class="r" style="left:-6.5px;top:694px;" width="9" height="9" viewBox="0 0 9 9"><rect x="0.5" y="0.5" width="8" height="8" fill="#fffef8" stroke="#9a9a9a"/><path d="M2.5 4.5 H6.5" stroke="#333"/></svg>
<div class="r" style="left:126.5px;top:707px;width:197px;height:18px;background:#ecefe6;"></div>
<div class="t" style="left:9.30px;top:708.40px;font-size:11.5px;color:#000;letter-spacing:-0.608px;">Type</div>
<div class="t" style="left:130.00px;top:708.40px;font-size:11.5px;color:#000;letter-spacing:0.140px;">Total Deformation</div>
<div class="r" style="left:126.5px;top:725px;width:197px;height:18px;background:#ecefe6;"></div>
<div class="t" style="left:9.30px;top:726.40px;font-size:11.5px;color:#000;letter-spacing:-0.900px;">By</div>
<div class="t" style="left:130.00px;top:726.40px;font-size:11.5px;color:#000;letter-spacing:-0.407px;">Time</div>
<div class="r" style="left:126.5px;top:743px;width:197px;height:18px;background:#ecefe6;"></div>
<div class="t" style="left:9.30px;top:744.40px;font-size:11.5px;color:#000;letter-spacing:-0.194px;">Display Time</div>
<div class="t" style="left:130.00px;top:744.40px;font-size:11.5px;color:#000;letter-spacing:-0.559px;">Last</div>
<div class="r" style="left:126.5px;top:761px;width:197px;height:18px;background:#ecefe6;"></div>
<div class="t" style="left:9.30px;top:762.40px;font-size:11.5px;color:#000;letter-spacing:-0.115px;">Calculate Time History</div>
<div class="t" style="left:130.00px;top:762.40px;font-size:11.5px;color:#000;letter-spacing:-0.900px;">Yes</div>
<div class="r" style="left:126.5px;top:779px;width:197px;height:18px;background:#ecefe6;"></div>
<div class="t" style="left:9.30px;top:780.40px;font-size:11.5px;color:#000;letter-spacing:0.239px;">Identifier</div>
<div class="r" style="left:126.5px;top:797px;width:197px;height:18px;background:#ecefe6;"></div>
<div class="t" style="left:9.30px;top:798.40px;font-size:11.5px;color:#000;letter-spacing:-0.237px;">Suppressed</div>
<div class="t" style="left:130.00px;top:798.40px;font-size:11.5px;color:#000;letter-spacing:-0.350px;">No</div>
<div class="t" style="left:9.30px;top:816.40px;font-size:11.5px;color:#000;font-weight:bold;letter-spacing:-0.649px;">Results</div>
<svg class="r" style="left:-6.5px;top:820px;" width="9" height="9" viewBox="0 0 9 9"><rect x="0.5" y="0.5" width="8" height="8" fill="#fffef8" stroke="#9a9a9a"/><path d="M2.5 4.5 H6.5" stroke="#333"/></svg>
<div class="r" style="left:126.5px;top:833px;width:197px;height:18px;background:#ecefe6;"></div>
<div class="t" style="left:9.30px;top:834.40px;font-size:11.5px;color:#000;letter-spacing:0.051px;">Minimum</div>
<div class="r" style="left:126.5px;top:851px;width:197px;height:18px;background:#ecefe6;"></div>
<div class="t" style="left:9.30px;top:852.40px;font-size:11.5px;color:#000;letter-spacing:-0.191px;">Maximum</div>
<div class="r" style="left:126.5px;top:869px;width:197px;height:18px;background:#ecefe6;"></div>
<div class="t" style="left:9.30px;top:870.40px;font-size:11.5px;color:#000;letter-spacing:-0.375px;">Average</div>
<div class="r" style="left:126.5px;top:887px;width:197px;height:18px;background:#ecefe6;"></div>
<div class="t" style="left:9.30px;top:888.40px;font-size:11.5px;color:#000;letter-spacing:-0.017px;">Minimum Occurs On</div>
<div class="r" style="left:126.5px;top:905px;width:197px;height:18px;background:#ecefe6;"></div>
<div class="t" style="left:9.30px;top:906.40px;font-size:11.5px;color:#000;letter-spacing:-0.146px;">Maximum Occurs On</div>
<div class="t" style="left:9.30px;top:924.40px;font-size:11.5px;color:#000;font-weight:bold;letter-spacing:-0.159px;">Information</div>
<svg class="r" style="left:-6.5px;top:928px;" width="9" height="9" viewBox="0 0 9 9"><rect x="0.5" y="0.5" width="8" height="8" fill="#fffef8" stroke="#9a9a9a"/><path d="M2.5 4.5 H6.5" stroke="#333"/></svg>
<div class="r" style="left:5px;top:635px;width:319px;height:1px;background:#a9ad9f;"></div>
<div class="r" style="left:5px;top:653px;width:319px;height:1px;background:#a9ad9f;"></div>
<div class="r" style="left:5px;top:671px;width:319px;height:1px;background:#a9ad9f;"></div>
<div class="r" style="left:5px;top:689px;width:319px;height:1px;background:#a9ad9f;"></div>
<div class="r" style="left:5px;top:707px;width:319px;height:1px;background:#a9ad9f;"></div>
<div class="r" style="left:5px;top:725px;width:319px;height:1px;background:#a9ad9f;"></div>
<div class="r" style="left:5px;top:743px;width:319px;height:1px;background:#a9ad9f;"></div>
<div class="r" style="left:5px;top:761px;width:319px;height:1px;background:#a9ad9f;"></div>
<div class="r" style="left:5px;top:779px;width:319px;height:1px;background:#a9ad9f;"></div>
<div class="r" style="left:5px;top:797px;width:319px;height:1px;background:#a9ad9f;"></div>
<div class="r" style="left:5px;top:815px;width:319px;height:1px;background:#a9ad9f;"></div>
<div class="r" style="left:5px;top:833px;width:319px;height:1px;background:#a9ad9f;"></div>
<div class="r" style="left:5px;top:851px;width:319px;height:1px;background:#a9ad9f;"></div>
<div class="r" style="left:5px;top:869px;width:319px;height:1px;background:#a9ad9f;"></div>
<div class="r" style="left:5px;top:887px;width:319px;height:1px;background:#a9ad9f;"></div>
<div class="r" style="left:5px;top:905px;width:319px;height:1px;background:#a9ad9f;"></div>
<div class="r" style="left:5px;top:923px;width:319px;height:1px;background:#a9ad9f;"></div>
<div class="r" style="left:5px;top:941px;width:319px;height:1px;background:#a9ad9f;"></div>
<div class="r" style="left:5px;top:635px;width:1px;height:307px;background:#a9ad9f;"></div>
<div class="r" style="left:323px;top:635px;width:1px;height:307px;background:#a9ad9f;"></div>
<div class="r" style="left:126px;top:653px;width:1px;height:36px;background:#a9ad9f;"></div>
<div class="r" style="left:126px;top:707px;width:1px;height:108px;background:#a9ad9f;"></div>
<div class="r" style="left:126px;top:833px;width:1px;height:90px;background:#a9ad9f;"></div>
<div class="r" style="left:328px;top:144px;width:944px;height:597px;overflow:hidden">
<div class="r" style="left:0px;top:0px;width:944px;height:15px;background:#698be1;"></div>
<div class="r" style="left:0px;top:15px;width:944px;height:29px;background:#718ddc;"></div>
<div class="r" style="left:0px;top:44px;width:944px;height:51px;background:#819eee;"></div>
<div class="r" style="left:0px;top:95px;width:944px;height:43px;background:#899ce3;"></div>
<div class="r" style="left:0px;top:138px;width:944px;height:43px;background:#9aaef5;"></div>
<div class="r" style="left:0px;top:181px;width:944px;height:4px;background:#9eaeeb;"></div>
<div class="r" style="left:0px;top:185px;width:944px;height:2px;background:#9ab5e5;"></div>
<div class="r" style="left:0px;top:187px;width:944px;height:2px;background:#9eaeeb;"></div>
<div class="r" style="left:0px;top:189px;width:944px;height:2px;background:#9ab5e5;"></div>
<div class="r" style="left:0px;top:191px;width:944px;height:4px;background:#9eaeeb;"></div>
<div class="r" style="left:0px;top:195px;width:944px;height:36px;background:#9ab5e5;"></div>
<div class="r" style="left:0px;top:231px;width:944px;height:34px;background:#aac6f6;"></div>
<div class="r" style="left:0px;top:265px;width:944px;height:59px;background:#b2c6ee;"></div>
<div class="r" style="left:0px;top:324px;width:944px;height:21px;background:#c3d7fc;"></div>
<div class="r" style="left:0px;top:345px;width:944px;height:73px;background:#cbd7f4;"></div>
<div class="r" style="left:0px;top:418px;width:944px;height:13px;background:#dde7fd;"></div>
<div class="r" style="left:0px;top:431px;width:944px;height:79px;background:#e6e8fc;"></div>
<div class="r" style="left:0px;top:510px;width:944px;height:69px;background:#fefafe;"></div>
<div class="r" style="left:0px;top:579px;width:944px;height:18px;background:#fafefe;"></div>
<svg class="r" style="left:0;top:0" width="944" height="597" viewBox="0 0 944 597" font-family="Liberation Sans, sans-serif"><defs><linearGradient id="gb" gradientUnits="userSpaceOnUse" x1="142" y1="436" x2="752" y2="326"><stop offset="0" stop-color="#637b7c"/><stop offset="1" stop-color="#6b888f"/></linearGradient><linearGradient id="gg" gradientUnits="userSpaceOnUse" x1="81" y1="383" x2="691" y2="264"><stop offset="0" stop-color="#75886a"/><stop offset="1" stop-color="#798c6e"/></linearGradient></defs><polygon points="80.7,383.3 629.3,212.7 690.6,263.9 142.1,434.0" fill="url(#gg)"/><polygon points="142.1,434.0 690.6,263.9 752.0,315.0 203.6,484.8" fill="url(#gb)"/><polygon points="80.7,383.3 142.1,434.0 143.5,442.3 82.1,391.6" fill="#3b4032"/><polygon points="142.1,434.0 203.6,484.8 204.8,492.8 143.5,442.3" fill="#2c3a3b"/><polygon points="203.6,484.8 752.0,315.0 753.2,323.0 204.8,492.8" fill="#7093a3"/><path d="M80.7,383.3 L629.3,212.7 M88.4,389.6 L637.0,219.1 M96.1,396.0 L644.6,225.5 M103.7,402.3 L652.3,231.9 M111.4,408.7 L660.0,238.3 M119.1,415.0 L667.6,244.7 M126.8,421.4 L675.3,251.1 M134.5,427.7 L683.0,257.5 M142.1,434.0 L690.6,263.9 M149.8,440.4 L698.3,270.2 M157.5,446.7 L706.0,276.6 M165.2,453.1 L713.7,283.0 M172.9,459.4 L721.3,289.4 M180.6,465.8 L729.0,295.8 M188.2,472.1 L736.7,302.2 M195.9,478.5 L744.3,308.6 M203.6,484.8 L752.0,315.0 M80.7,383.3 L203.6,484.8 M115.0,372.6 L237.9,474.2 M149.3,362.0 L272.1,463.6 M183.6,351.3 L306.4,453.0 M217.8,340.6 L340.7,442.3 M252.1,330.0 L375.0,431.7 M286.4,319.3 L409.2,421.1 M320.7,308.7 L443.5,410.5 M355.0,298.0 L477.8,399.9 M389.3,287.3 L512.1,389.3 M423.6,276.7 L546.4,378.7 M457.9,266.0 L580.6,368.1 M492.1,255.3 L614.9,357.4 M526.4,244.7 L649.2,346.8 M560.7,234.0 L683.5,336.2 M595.0,223.4 L717.7,325.6 M629.3,212.7 L752.0,315.0 M82.1,391.6 L143.5,442.3 L204.8,492.8 L753.2,323.0 M80.7,383.3 L82.1,391.6 M80.7,383.3 L82.1,391.6 M88.4,389.6 L89.8,397.9 M96.1,396.0 L97.4,404.2 M103.7,402.3 L105.1,410.6 M111.4,408.7 L112.8,416.9 M119.1,415.0 L120.4,423.2 M126.8,421.4 L128.1,429.5 M134.5,427.7 L135.8,435.9 M142.1,434.0 L143.4,442.2 M149.8,440.4 L151.1,448.5 M157.5,446.7 L158.8,454.8 M165.2,453.1 L166.5,461.2 M172.9,459.4 L174.1,467.5 M180.6,465.8 L181.8,473.8 M188.2,472.1 L189.5,480.1 M195.9,478.5 L197.1,486.5 M203.6,484.8 L204.8,492.8 M237.9,474.2 L239.1,482.2 M272.1,463.6 L273.4,471.6 M306.4,453.0 L307.6,461.0 M340.7,442.3 L341.9,450.3 M375.0,431.7 L376.2,439.7 M409.2,421.1 L410.5,429.1 M443.5,410.5 L444.7,418.5 M477.8,399.9 L479.0,407.9 M512.1,389.3 L513.3,397.3 M546.4,378.7 L547.6,386.7 M580.6,368.1 L581.8,376.1 M614.9,357.4 L616.1,365.4 M649.2,346.8 L650.4,354.8 M683.5,336.2 L684.7,344.2 M717.7,325.6 L718.9,333.6 M752.0,315.0 L753.2,323.0" fill="none" stroke="#0b0d0a" stroke-width="1.15" stroke-linejoin="round" shape-rendering="crispEdges"/><polygon points="669.1,250.2 675.2,245.8 690.0,239.8 708.2,238.9 710.1,240.9 710.1,246.4 704.9,249.7 700.5,254.6 697.2,255.2 697.7,261.2 695.0,263.4 689.5,264.0 688.4,259.0 684.5,257.6 675.7,257.4 670.8,255.7 669.1,251.9" fill="#15180f" stroke="#060705" stroke-width="1"/><rect x="695.4" y="241.7" width="2.5" height="1.1" fill="#c9c9b2" transform="rotate(-10 695.4 241.7)"/><rect x="686.3" y="245.5" width="2.5" height="0.9" fill="#9a9c84" transform="rotate(-20 686.3 245.5)"/><rect x="692.7" y="241.4" width="2.6" height="0.9" fill="#b4b69d" transform="rotate(-20 692.7 241.4)"/><rect x="691.7" y="243.1" width="2.2" height="1.2" fill="#9a9c84" transform="rotate(-25 691.7 243.1)"/><rect x="691.9" y="255.7" width="1.4" height="1.2" fill="#b4b69d" transform="rotate(-25 691.9 255.7)"/><rect x="692.0" y="254.2" width="2.4" height="1.2" fill="#8c8f76" transform="rotate(60 692.0 254.2)"/><rect x="692.8" y="250.4" width="1.9" height="1.4" fill="#b4b69d" transform="rotate(-20 692.8 250.4)"/><rect x="692.4" y="252.1" width="3.3" height="1.3" fill="#8c8f76" transform="rotate(-10 692.4 252.1)"/><rect x="708.2" y="242.7" width="2.2" height="1.4" fill="#b4b69d" transform="rotate(60 708.2 242.7)"/><rect x="673.0" y="252.8" width="3.1" height="1.4" fill="#8c8f76" transform="rotate(-25 673.0 252.8)"/><rect x="693.2" y="253.3" width="2.3" height="1.4" fill="#8c8f76" transform="rotate(60 693.2 253.3)"/><rect x="697.2" y="241.5" width="3.0" height="1.1" fill="#9a9c84" transform="rotate(60 697.2 241.5)"/><rect x="681.1" y="248.9" width="2.8" height="0.9" fill="#d8d8c4" transform="rotate(-25 681.1 248.9)"/><rect x="673.1" y="250.3" width="2.5" height="1.4" fill="#d8d8c4" transform="rotate(-10 673.1 250.3)"/><rect x="680.9" y="249.6" width="2.1" height="1.4" fill="#b4b69d" transform="rotate(-15 680.9 249.6)"/><rect x="702.4" y="244.2" width="1.9" height="1.0" fill="#9a9c84" transform="rotate(-25 702.4 244.2)"/><rect x="693.8" y="247.3" width="1.5" height="1.4" fill="#9a9c84" transform="rotate(-20 693.8 247.3)"/><rect x="691.8" y="249.2" width="2.1" height="1.2" fill="#d8d8c4" transform="rotate(-20 691.8 249.2)"/><rect x="687.2" y="242.5" width="2.6" height="1.0" fill="#9a9c84" transform="rotate(-15 687.2 242.5)"/><rect x="690.9" y="261.8" width="2.7" height="0.9" fill="#b4b69d" transform="rotate(-10 690.9 261.8)"/><rect x="684.7" y="254.6" width="3.5" height="1.3" fill="#d8d8c4" transform="rotate(-20 684.7 254.6)"/><rect x="674.5" y="251.2" width="3.5" height="1.2" fill="#8c8f76" transform="rotate(-20 674.5 251.2)"/><rect x="698.9" y="251.0" width="2.9" height="1.2" fill="#b4b69d" transform="rotate(-10 698.9 251.0)"/><rect x="684.1" y="255.9" width="3.4" height="1.4" fill="#8c8f76" transform="rotate(-20 684.1 255.9)"/><rect x="697.2" y="246.0" width="2.1" height="1.0" fill="#b4b69d" transform="rotate(-10 697.2 246.0)"/><rect x="691.1" y="251.6" width="2.7" height="1.3" fill="#b4b69d" transform="rotate(-15 691.1 251.6)"/><rect x="678.8" y="251.9" width="2.1" height="0.9" fill="#c9c9b2" transform="rotate(-25 678.8 251.9)"/><rect x="688.4" y="244.5" width="2.7" height="1.1" fill="#8c8f76" transform="rotate(-25 688.4 244.5)"/><rect x="688.3" y="247.8" width="2.4" height="1.5" fill="#9a9c84" transform="rotate(-20 688.3 247.8)"/><rect x="688.7" y="255.0" width="3.1" height="1.0" fill="#c9c9b2" transform="rotate(60 688.7 255.0)"/><rect x="688.6" y="244.1" width="3.1" height="1.1" fill="#d8d8c4" transform="rotate(60 688.6 244.1)"/><rect x="698.3" y="243.9" width="1.5" height="1.0" fill="#d8d8c4" transform="rotate(-15 698.3 243.9)"/><rect x="693.9" y="253.7" width="2.3" height="1.5" fill="#b4b69d" transform="rotate(-10 693.9 253.7)"/><rect x="689.5" y="257.6" width="2.0" height="1.2" fill="#b4b69d" transform="rotate(-20 689.5 257.6)"/><rect x="687.9" y="253.4" width="3.4" height="1.2" fill="#9a9c84" transform="rotate(-15 687.9 253.4)"/><rect x="690.7" y="252.0" width="1.2" height="1.2" fill="#b4b69d" transform="rotate(-10 690.7 252.0)"/><rect x="676.7" y="250.9" width="2.9" height="1.2" fill="#8c8f76" transform="rotate(-10 676.7 250.9)"/><rect x="690.7" y="251.1" width="3.1" height="1.4" fill="#c9c9b2" transform="rotate(-15 690.7 251.1)"/><rect x="673.8" y="250.4" width="1.3" height="1.4" fill="#c9c9b2" transform="rotate(60 673.8 250.4)"/><rect x="693.6" y="244.6" width="1.9" height="1.2" fill="#d8d8c4" transform="rotate(-10 693.6 244.6)"/><rect x="680.1" y="252.9" width="3.5" height="1.4" fill="#b4b69d" transform="rotate(60 680.1 252.9)"/><rect x="674.7" y="250.2" width="1.4" height="1.0" fill="#c9c9b2" transform="rotate(-15 674.7 250.2)"/><rect x="705.0" y="243.6" width="2.9" height="1.3" fill="#b4b69d" transform="rotate(-25 705.0 243.6)"/><rect x="685.5" y="251.2" width="3.6" height="1.4" fill="#b4b69d" transform="rotate(60 685.5 251.2)"/><rect x="686.4" y="248.2" width="1.4" height="1.1" fill="#8c8f76" transform="rotate(-10 686.4 248.2)"/><rect x="687.9" y="256.2" width="2.1" height="1.2" fill="#8c8f76" transform="rotate(-10 687.9 256.2)"/><rect x="686.0" y="258.6" width="1.6" height="1.4" fill="#f4f6ff"/><path d="M695.4 236.5 V249.0 M689.0 242.0 H701.0" stroke="#6f8fe0" stroke-width="1.2" fill="none"/><path d="M864.7 526.8 L825.5 539.0" stroke="#0505a8" stroke-width="3" /><polygon points="813.5,542.6 822.6,534.6 827.2,545.0" fill="#04049a"/><path d="M864.7 526.8 L854.4 487.0" stroke="#0a7a12" stroke-width="3" /><polygon points="851.3,475.0 848.8,488.4 860.2,486.2" fill="#0c8a16"/><path d="M864.7 526.8 L871.0 532.5" stroke="#8a0a0a" stroke-width="3" /><circle cx="873.4" cy="534.6" r="5.2" fill="#b01010"/><circle cx="874.2" cy="533.6" r="2.6" fill="#d22a2a"/><circle cx="839.7" cy="514.4" r="5.6" fill="#1fb4c0"/><circle cx="840.6" cy="513.2" r="3" fill="#3fd8e2"/><text x="851.6" y="466.8" font-size="12" fill="#0f9a1c" text-anchor="middle">Y</text><text x="807.7" y="545.6" font-size="12" fill="#1010b8" text-anchor="middle">Z</text><text x="881.8" y="538.8" font-size="12" fill="#c01818" text-anchor="middle">X</text><text x="840.6" y="49.0" font-size="29.6" font-weight="bold" fill="#fffef8" stroke="#fffef8" stroke-width="0.8" textLength="78.2" lengthAdjust="spacingAndGlyphs">ANSYS</text><text x="858.1" y="66.8" font-size="17" fill="#fffef8" textLength="38.3" lengthAdjust="spacingAndGlyphs">2020</text><text x="900.2" y="66.8" font-size="17" font-weight="bold" fill="#fffef8" textLength="19" lengthAdjust="spacingAndGlyphs">R2</text><rect x="326.0" y="549.0" width="290.3" height="11.5" fill="#fff" stroke="#000" stroke-width="1"/><rect x="326.0" y="549.0" width="72.6" height="11.5" fill="#000"/><rect x="471.1" y="549.0" width="72.6" height="11.5" fill="#000"/><text x="315.4" y="546.0" font-size="11" fill="#000" text-anchor="start">0.00</text><text x="471.0" y="546.0" font-size="11" fill="#000" text-anchor="middle">50.00</text><text x="600.8" y="546.0" font-size="11" fill="#000" text-anchor="start">100.00 (mm)</text><text x="398.5" y="575.5" font-size="11" fill="#000" text-anchor="middle">25.00</text><text x="544.0" y="575.5" font-size="11" fill="#000" text-anchor="middle">75.00</text></svg>
<div class="t" style="left:15.00px;top:13.50px;font-size:11.5px;color:#000;font-weight:bold;letter-spacing:0.023px;">A: Transient Structural</div>
<div class="t" style="left:15.00px;top:28.50px;font-size:11.5px;color:#000;letter-spacing:0.316px;">Total Deformation</div>
<div class="t" style="left:15.00px;top:43.50px;font-size:11.5px;color:#000;letter-spacing:0.010px;">10/8/2021 8:11 PM</div>
</div>
<div class="r" style="left:328px;top:745px;width:944px;height:1px;background:#dedbea;"></div>
<div class="r" style="left:328px;top:745px;width:1px;height:20px;background:#dedbea;"></div>
<div class="r" style="left:1271px;top:745px;width:1px;height:20px;background:#dedbea;"></div>
<div class="t" style="left:333.50px;top:746.80px;font-size:12px;color:#1b1b1b;letter-spacing:-0.295px;">Tabular Data</div>
<svg class="r" style="left:402px;top:752px;" width="816" height="5" viewBox="0 0 816 5"><g fill="#a3a1b2"><rect x="2" y="0" width="1" height="1"/><rect x="2" y="4" width="1" height="1"/><rect x="0" y="2" width="1" height="1"/><rect x="6" y="0" width="1" height="1"/><rect x="6" y="4" width="1" height="1"/><rect x="4" y="2" width="1" height="1"/><rect x="10" y="0" width="1" height="1"/><rect x="10" y="4" width="1" height="1"/><rect x="8" y="2" width="1" height="1"/><rect x="14" y="0" width="1" height="1"/><rect x="14" y="4" width="1" height="1"/><rect x="12" y="2" width="1" height="1"/><rect x="18" y="0" width="1" height="1"/><rect x="18" y="4" width="1" height="1"/><rect x="16" y="2" width="1" height="1"/><rect x="22" y="0" width="1" height="1"/><rect x="22" y="4" width="1" height="1"/><rect x="20" y="2" width="1" height="1"/><rect x="26" y="0" width="1" height="1"/><rect x="26" y="4" width="1" height="1"/><rect x="24" y="2" width="1" height="1"/><rect x="30" y="0" width="1" height="1"/><rect x="30" y="4" width="1" height="1"/><rect x="28" y="2" width="1" height="1"/><rect x="34" y="0" width="1" height="1"/><rect x="34" y="4" width="1" height="1"/><rect x="32" y="2" width="1" height="1"/><rect x="38" y="0" width="1" height="1"/><rect x="38" y="4" width="1" height="1"/><rect x="36" y="2" width="1" height="1"/><rect x="42" y="0" width="1" height="1"/><rect x="42" y="4" width="1" height="1"/><rect x="40" y="2" width="1" height="1"/><rect x="46" y="0" width="1" height="1"/><rect x="46" y="4" width="1" height="1"/><rect x="44" y="2" width="1" height="1"/><rect x="50" y="0" width="1" height="1"/><rect x="50" y="4" width="1" height="1"/><rect x="48" y="2" width="1" height="1"/><rect x="54" y="0" width="1" height="1"/><rect x="54" y="4" width="1" height="1"/><rect x="52" y="2" width="1" height="1"/><rect x="58" y="0" width="1" height="1"/><rect x="58" y="4" width="1" height="1"/><rect x="56" y="2" width="1" height="1"/><rect x="62" y="0" width="1" height="1"/><rect x="62" y="4" width="1" height="1"/><rect x="60" y="2" width="1" height="1"/><rect x="66" y="0" width="1" height="1"/><rect x="66" y="4" width="1" height="1"/><rect x="64" y="2" width="1" height="1"/><rect x="70" y="0" width="1" height="1"/><rect x="70" y="4" width="1" height="1"/><rect x="68" y="2" width="1" height="1"/><rect x="74" y="0" width="1" height="1"/><rect x="74" y="4" width="1" height="1"/><rect x="72" y="2" width="1" height="1"/><rect x="78" y="0" width="1" height="1"/><rect x="78" y="4" width="1" height="1"/><rect x="76" y="2" width="1" height="1"/><rect x="82" y="0" width="1" height="1"/><rect x="82" y="4" width="1" height="1"/><rect x="80" y="2" width="1" height="1"/><rect x="86" y="0" width="1" height="1"/><rect x="86" y="4" width="1" height="1"/><rect x="84" y="2" width="1" height="1"/><rect x="90" y="0" width="1" height="1"/><rect x="90" y="4" width="1" height="1"/><rect x="88" y="2" width="1" height="1"/><rect x="94" y="0" width="1" height="1"/><rect x="94" y="4" width="1" height="1"/><rect x="92" y="2" width="1" height="1"/><rect x="98" y="0" width="1" height="1"/><rect x="98" y="4" width="1" height="1"/><rect x="96" y="2" width="1" height="1"/><rect x="102" y="0" width="1" height="1"/><rect x="102" y="4" width="1" height="1"/><rect x="100" y="2" width="1" height="1"/><rect x="106" y="0" width="1" height="1"/><rect x="106" y="4" width="1" height="1"/><rect x="104" y="2" width="1" height="1"/><rect x="110" y="0" width="1" height="1"/><rect x="110" y="4" width="1" height="1"/><rect x="108" y="2" width="1" height="1"/><rect x="114" y="0" width="1" height="1"/><rect x="114" y="4" width="1" height="1"/><rect x="112" y="2" width="1" height="1"/><rect x="118" y="0" width="1" height="1"/><rect x="118" y="4" width="1" height="1"/><rect x="116" y="2" width="1" height="1"/><rect x="122" y="0" width="1" height="1"/><rect x="122" y="4" width="1" height="1"/><rect x="120" y="2" width="1" height="1"/><rect x="126" y="0" width="1" height="1"/><rect x="126" y="4" width="1" height="1"/><rect x="124" y="2" width="1" height="1"/><rect x="130" y="0" width="1" height="1"/><rect x="130" y="4" width="1" height="1"/><rect x="128" y="2" width="1" height="1"/><rect x="134" y="0" width="1" height="1"/><rect x="134" y="4" width="1" height="1"/><rect x="132" y="2" width="1" height="1"/><rect x="138" y="0" width="1" height="1"/><rect x="138" y="4" width="1" height="1"/><rect x="136" y="2" width="1" height="1"/><rect x="142" y="0" width="1" height="1"/><rect x="142" y="4" width="1" height="1"/><rect x="140" y="2" width="1" height="1"/><rect x="146" y="0" width="1" height="1"/><rect x="146" y="4" width="1" height="1"/><rect x="144" y="2" width="1" height="1"/><rect x="150" y="0" width="1" height="1"/><rect x="150" y="4" width="1" height="1"/><rect x="148" y="2" width="1" height="1"/><rect x="154" y="0" width="1" height="1"/><rect x="154" y="4" width="1" height="1"/><rect x="152" y="2" width="1" height="1"/><rect x="158" y="0" width="1" height="1"/><rect x="158" y="4" width="1" height="1"/><rect x="156" y="2" width="1" height="1"/><rect x="162" y="0" width="1" height="1"/><rect x="162" y="4" width="1" height="1"/><rect x="160" y="2" width="1" height="1"/><rect x="166" y="0" width="1" height="1"/><rect x="166" y="4" width="1" height="1"/><rect x="164" y="2" width="1" height="1"/><rect x="170" y="0" width="1" height="1"/><rect x="170" y="4" width="1" height="1"/><rect x="168" y="2" width="1" height="1"/><rect x="174" y="0" width="1" height="1"/><rect x="174" y="4" width="1" height="1"/><rect x="172" y="2" width="1" height="1"/><rect x="178" y="0" width="1" height="1"/><rect x="178" y="4" width="1" height="1"/><rect x="176" y="2" width="1" height="1"/><rect x="182" y="0" width="1" height="1"/><rect x="182" y="4" width="1" height="1"/><rect x="180" y="2" width="1" height="1"/><rect x="186" y="0" width="1" height="1"/><rect x="186" y="4" width="1" height="1"/><rect x="184" y="2" width="1" height="1"/><rect x="190" y="0" width="1" height="1"/><rect x="190" y="4" width="1" height="1"/><rect x="188" y="2" width="1" height="1"/><rect x="194" y="0" width="1" height="1"/><rect x="194" y="4" width="1" height="1"/><rect x="192" y="2" width="1" height="1"/><rect x="198" y="0" width="1" height="1"/><rect x="198" y="4" width="1" height="1"/><rect x="196" y="2" width="1" height="1"/><rect x="202" y="0" width="1" height="1"/><rect x="202" y="4" width="1" height="1"/><rect x="200" y="2" width="1" height="1"/><rect x="206" y="0" width="1" height="1"/><rect x="206" y="4" width="1" height="1"/><rect x="204" y="2" width="1" height="1"/><rect x="210" y="0" width="1" height="1"/><rect x="210" y="4" width="1" height="1"/><rect x="208" y="2" width="1" height="1"/><rect x="214" y="0" width="1" height="1"/><rect x="214" y="4" width="1" height="1"/><rect x="212" y="2" width="1" height="1"/><rect x="218" y="0" width="1" height="1"/><rect x="218" y="4" width="1" height="1"/><rect x="216" y="2" width="1" height="1"/><rect x="222" y="0" width="1" height="1"/><rect x="222" y="4" width="1" height="1"/><rect x="220" y="2" width="1" height="1"/><rect x="226" y="0" width="1" height="1"/><rect x="226" y="4" width="1" height="1"/><rect x="224" y="2" width="1" height="1"/><rect x="230" y="0" width="1" height="1"/><rect x="230" y="4" width="1" height="1"/><rect x="228" y="2" width="1" height="1"/><rect x="234" y="0" width="1" height="1"/><rect x="234" y="4" width="1" height="1"/><rect x="232" y="2" width="1" height="1"/><rect x="238" y="0" width="1" height="1"/><rect x="238" y="4" width="1" height="1"/><rect x="236" y="2" width="1" height="1"/><rect x="242" y="0" width="1" height="1"/><rect x="242" y="4" width="1" height="1"/><rect x="240" y="2" width="1" height="1"/><rect x="246" y="0" width="1" height="1"/><rect x="246" y="4" width="1" height="1"/><rect x="244" y="2" width="1" height="1"/><rect x="250" y="0" width="1" height="1"/><rect x="250" y="4" width="1" height="1"/><rect x="248" y="2" width="1" height="1"/><rect x="254" y="0" width="1" height="1"/><rect x="254" y="4" width="1" height="1"/><rect x="252" y="2" width="1" height="1"/><rect x="258" y="0" width="1" height="1"/><rect x="258" y="4" width="1" height="1"/><rect x="256" y="2" width="1" height="1"/><rect x="262" y="0" width="1" height="1"/><rect x="262" y="4" width="1" height="1"/><rect x="260" y="2" width="1" height="1"/><rect x="266" y="0" width="1" height="1"/><rect x="266" y="4" width="1" height="1"/><rect x="264" y="2" width="1" height="1"/><rect x="270" y="0" width="1" height="1"/><rect x="270" y="4" width="1" height="1"/><rect x="268" y="2" width="1" height="1"/><rect x="274" y="0" width="1" height="1"/><rect x="274" y="4" width="1" height="1"/><rect x="272" y="2" width="1" height="1"/><rect x="278" y="0" width="1" height="1"/><rect x="278" y="4" width="1" height="1"/><rect x="276" y="2" width="1" height="1"/><rect x="282" y="0" width="1" height="1"/><rect x="282" y="4" width="1" height="1"/><rect x="280" y="2" width="1" height="1"/><rect x="286" y="0" width="1" height="1"/><rect x="286" y="4" width="1" height="1"/><rect x="284" y="2" width="1" height="1"/><rect x="290" y="0" width="1" height="1"/><rect x="290" y="4" width="1" height="1"/><rect x="288" y="2" width="1" height="1"/><rect x="294" y="0" width="1" height="1"/><rect x="294" y="4" width="1" height="1"/><rect x="292" y="2" width="1" height="1"/><rect x="298" y="0" width="1" height="1"/><rect x="298" y="4" width="1" height="1"/><rect x="296" y="2" width="1" height="1"/><rect x="302" y="0" width="1" height="1"/><rect x="302" y="4" width="1" height="1"/><rect x="300" y="2" width="1" height="1"/><rect x="306" y="0" width="1" height="1"/><rect x="306" y="4" width="1" height="1"/><rect x="304" y="2" width="1" height="1"/><rect x="310" y="0" width="1" height="1"/><rect x="310" y="4" width="1" height="1"/><rect x="308" y="2" width="1" height="1"/><rect x="314" y="0" width="1" height="1"/><rect x="314" y="4" width="1" height="1"/><rect x="312" y="2" width="1" height="1"/><rect x="318" y="0" width="1" height="1"/><rect x="318" y="4" width="1" height="1"/><rect x="316" y="2" width="1" height="1"/><rect x="322" y="0" width="1" height="1"/><rect x="322" y="4" width="1" height="1"/><rect x="320" y="2" width="1" height="1"/><rect x="326" y="0" width="1" height="1"/><rect x="326" y="4" width="1" height="1"/><rect x="324" y="2" width="1" height="1"/><rect x="330" y="0" width="1" height="1"/><rect x="330" y="4" width="1" height="1"/><rect x="328" y="2" width="1" height="1"/><rect x="334" y="0" width="1" height="1"/><rect x="334" y="4" width="1" height="1"/><rect x="332" y="2" width="1" height="1"/><rect x="338" y="0" width="1" height="1"/><rect x="338" y="4" width="1" height="1"/><rect x="336" y="2" width="1" height="1"/><rect x="342" y="0" width="1" height="1"/><rect x="342" y="4" width="1" height="1"/><rect x="340" y="2" width="1" height="1"/><rect x="346" y="0" width="1" height="1"/><rect x="346" y="4" width="1" height="1"/><rect x="344" y="2" width="1" height="1"/><rect x="350" y="0" width="1" height="1"/><rect x="350" y="4" width="1" height="1"/><rect x="348" y="2" width="1" height="1"/><rect x="354" y="0" width="1" height="1"/><rect x="354" y="4" width="1" height="1"/><rect x="352" y="2" width="1" height="1"/><rect x="358" y="0" width="1" height="1"/><rect x="358" y="4" width="1" height="1"/><rect x="356" y="2" width="1" height="1"/><rect x="362" y="0" width="1" height="1"/><rect x="362" y="4" width="1" height="1"/><rect x="360" y="2" width="1" height="1"/><rect x="366" y="0" width="1" height="1"/><rect x="366" y="4" width="1" height="1"/><rect x="364" y="2" width="1" height="1"/><rect x="370" y="0" width="1" height="1"/><rect x="370" y="4" width="1" height="1"/><rect x="368" y="2" width="1" height="1"/><rect x="374" y="0" width="1" height="1"/><rect x="374" y="4" width="1" height="1"/><rect x="372" y="2" width="1" height="1"/><rect x="378" y="0" width="1" height="1"/><rect x="378" y="4" width="1" height="1"/><rect x="376" y="2" width="1" height="1"/><rect x="382" y="0" width="1" height="1"/><rect x="382" y="4" width="1" height="1"/><rect x="380" y="2" width="1" height="1"/><rect x="386" y="0" width="1" height="1"/><rect x="386" y="4" width="1" height="1"/><rect x="384" y="2" width="1" height="1"/><rect x="390" y="0" width="1" height="1"/><rect x="390" y="4" width="1" height="1"/><rect x="388" y="2" width="1" height="1"/><rect x="394" y="0" width="1" height="1"/><rect x="394" y="4" width="1" height="1"/><rect x="392" y="2" width="1" height="1"/><rect x="398" y="0" width="1" height="1"/><rect x="398" y="4" width="1" height="1"/><rect x="396" y="2" width="1" height="1"/><rect x="402" y="0" width="1" height="1"/><rect x="402" y="4" width="1" height="1"/><rect x="400" y="2" width="1" height="1"/><rect x="406" y="0" width="1" height="1"/><rect x="406" y="4" width="1" height="1"/><rect x="404" y="2" width="1" height="1"/><rect x="410" y="0" width="1" height="1"/><rect x="410" y="4" width="1" height="1"/><rect x="408" y="2" width="1" height="1"/><rect x="414" y="0" width="1" height="1"/><rect x="414" y="4" width="1" height="1"/><rect x="412" y="2" width="1" height="1"/><rect x="418" y="0" width="1" height="1"/><rect x="418" y="4" width="1" height="1"/><rect x="416" y="2" width="1" height="1"/><rect x="422" y="0" width="1" height="1"/><rect x="422" y="4" width="1" height="1"/><rect x="420" y="2" width="1" height="1"/><rect x="426" y="0" width="1" height="1"/><rect x="426" y="4" width="1" height="1"/><rect x="424" y="2" width="1" height="1"/><rect x="430" y="0" width="1" height="1"/><rect x="430" y="4" width="1" height="1"/><rect x="428" y="2" width="1" height="1"/><rect x="434" y="0" width="1" height="1"/><rect x="434" y="4" width="1" height="1"/><rect x="432" y="2" width="1" height="1"/><rect x="438" y="0" width="1" height="1"/><rect x="438" y="4" width="1" height="1"/><rect x="436" y="2" width="1" height="1"/><rect x="442" y="0" width="1" height="1"/><rect x="442" y="4" width="1" height="1"/><rect x="440" y="2" width="1" height="1"/><rect x="446" y="0" width="1" height="1"/><rect x="446" y="4" width="1" height="1"/><rect x="444" y="2" width="1" height="1"/><rect x="450" y="0" width="1" height="1"/><rect x="450" y="4" width="1" height="1"/><rect x="448" y="2" width="1" height="1"/><rect x="454" y="0" width="1" height="1"/><rect x="454" y="4" width="1" height="1"/><rect x="452" y="2" width="1" height="1"/><rect x="458" y="0" width="1" height="1"/><rect x="458" y="4" width="1" height="1"/><rect x="456" y="2" width="1" height="1"/><rect x="462" y="0" width="1" height="1"/><rect x="462" y="4" width="1" height="1"/><rect x="460" y="2" width="1" height="1"/><rect x="466" y="0" width="1" height="1"/><rect x="466" y="4" width="1" height="1"/><rect x="464" y="2" width="1" height="1"/><rect x="470" y="0" width="1" height="1"/><rect x="470" y="4" width="1" height="1"/><rect x="468" y="2" width="1" height="1"/><rect x="474" y="0" width="1" height="1"/><rect x="474" y="4" width="1" height="1"/><rect x="472" y="2" width="1" height="1"/><rect x="478" y="0" width="1" height="1"/><rect x="478" y="4" width="1" height="1"/><rect x="476" y="2" width="1" height="1"/><rect x="482" y="0" width="1" height="1"/><rect x="482" y="4" width="1" height="1"/><rect x="480" y="2" width="1" height="1"/><rect x="486" y="0" width="1" height="1"/><rect x="486" y="4" width="1" height="1"/><rect x="484" y="2" width="1" height="1"/><rect x="490" y="0" width="1" height="1"/><rect x="490" y="4" width="1" height="1"/><rect x="488" y="2" width="1" height="1"/><rect x="494" y="0" width="1" height="1"/><rect x="494" y="4" width="1" height="1"/><rect x="492" y="2" width="1" height="1"/><rect x="498" y="0" width="1" height="1"/><rect x="498" y="4" width="1" height="1"/><rect x="496" y="2" width="1" height="1"/><rect x="502" y="0" width="1" height="1"/><rect x="502" y="4" width="1" height="1"/><rect x="500" y="2" width="1" height="1"/><rect x="506" y="0" width="1" height="1"/><rect x="506" y="4" width="1" height="1"/><rect x="504" y="2" width="1" height="1"/><rect x="510" y="0" width="1" height="1"/><rect x="510" y="4" width="1" height="1"/><rect x="508" y="2" width="1" height="1"/><rect x="514" y="0" width="1" height="1"/><rect x="514" y="4" width="1" height="1"/><rect x="512" y="2" width="1" height="1"/><rect x="518" y="0" width="1" height="1"/><rect x="518" y="4" width="1" height="1"/><rect x="516" y="2" width="1" height="1"/><rect x="522" y="0" width="1" height="1"/><rect x="522" y="4" width="1" height="1"/><rect x="520" y="2" width="1" height="1"/><rect x="526" y="0" width="1" height="1"/><rect x="526" y="4" width="1" height="1"/><rect x="524" y="2" width="1" height="1"/><rect x="530" y="0" width="1" height="1"/><rect x="530" y="4" width="1" height="1"/><rect x="528" y="2" width="1" height="1"/><rect x="534" y="0" width="1" height="1"/><rect x="534" y="4" width="1" height="1"/><rect x="532" y="2" width="1" height="1"/><rect x="538" y="0" width="1" height="1"/><rect x="538" y="4" width="1" height="1"/><rect x="536" y="2" width="1" height="1"/><rect x="542" y="0" width="1" height="1"/><rect x="542" y="4" width="1" height="1"/><rect x="540" y="2" width="1" height="1"/><rect x="546" y="0" width="1" height="1"/><rect x="546" y="4" width="1" height="1"/><rect x="544" y="2" width="1" height="1"/><rect x="550" y="0" width="1" height="1"/><rect x="550" y="4" width="1" height="1"/><rect x="548" y="2" width="1" height="1"/><rect x="554" y="0" width="1" height="1"/><rect x="554" y="4" width="1" height="1"/><rect x="552" y="2" width="1" height="1"/><rect x="558" y="0" width="1" height="1"/><rect x="558" y="4" width="1" height="1"/><rect x="556" y="2" width="1" height="1"/><rect x="562" y="0" width="1" height="1"/><rect x="562" y="4" width="1" height="1"/><rect x="560" y="2" width="1" height="1"/><rect x="566" y="0" width="1" height="1"/><rect x="566" y="4" width="1" height="1"/><rect x="564" y="2" width="1" height="1"/><rect x="570" y="0" width="1" height="1"/><rect x="570" y="4" width="1" height="1"/><rect x="568" y="2" width="1" height="1"/><rect x="574" y="0" width="1" height="1"/><rect x="574" y="4" width="1" height="1"/><rect x="572" y="2" width="1" height="1"/><rect x="578" y="0" width="1" height="1"/><rect x="578" y="4" width="1" height="1"/><rect x="576" y="2" width="1" height="1"/><rect x="582" y="0" width="1" height="1"/><rect x="582" y="4" width="1" height="1"/><rect x="580" y="2" width="1" height="1"/><rect x="586" y="0" width="1" height="1"/><rect x="586" y="4" width="1" height="1"/><rect x="584" y="2" width="1" height="1"/><rect x="590" y="0" width="1" height="1"/><rect x="590" y="4" width="1" height="1"/><rect x="588" y="2" width="1" height="1"/><rect x="594" y="0" width="1" height="1"/><rect x="594" y="4" width="1" height="1"/><rect x="592" y="2" width="1" height="1"/><rect x="598" y="0" width="1" height="1"/><rect x="598" y="4" width="1" height="1"/><rect x="596" y="2" width="1" height="1"/><rect x="602" y="0" width="1" height="1"/><rect x="602" y="4" width="1" height="1"/><rect x="600" y="2" width="1" height="1"/><rect x="606" y="0" width="1" height="1"/><rect x="606" y="4" width="1" height="1"/><rect x="604" y="2" width="1" height="1"/><rect x="610" y="0" width="1" height="1"/><rect x="610" y="4" width="1" height="1"/><rect x="608" y="2" width="1" height="1"/><rect x="614" y="0" width="1" height="1"/><rect x="614" y="4" width="1" height="1"/><rect x="612" y="2" width="1" height="1"/><rect x="618" y="0" width="1" height="1"/><rect x="618" y="4" width="1" height="1"/><rect x="616" y="2" width="1" height="1"/><rect x="622" y="0" width="1" height="1"/><rect x="622" y="4" width="1" height="1"/><rect x="620" y="2" width="1" height="1"/><rect x="626" y="0" width="1" height="1"/><rect x="626" y="4" width="1" height="1"/><rect x="624" y="2" width="1" height="1"/><rect x="630" y="0" width="1" height="1"/><rect x="630" y="4" width="1" height="1"/><rect x="628" y="2" width="1" height="1"/><rect x="634" y="0" width="1" height="1"/><rect x="634" y="4" width="1" height="1"/><rect x="632" y="2" width="1" height="1"/><rect x="638" y="0" width="1" height="1"/><rect x="638" y="4" width="1" height="1"/><rect x="636" y="2" width="1" height="1"/><rect x="642" y="0" width="1" height="1"/><rect x="642" y="4" width="1" height="1"/><rect x="640" y="2" width="1" height="1"/><rect x="646" y="0" width="1" height="1"/><rect x="646" y="4" width="1" height="1"/><rect x="644" y="2" width="1" height="1"/><rect x="650" y="0" width="1" height="1"/><rect x="650" y="4" width="1" height="1"/><rect x="648" y="2" width="1" height="1"/><rect x="654" y="0" width="1" height="1"/><rect x="654" y="4" width="1" height="1"/><rect x="652" y="2" width="1" height="1"/><rect x="658" y="0" width="1" height="1"/><rect x="658" y="4" width="1" height="1"/><rect x="656" y="2" width="1" height="1"/><rect x="662" y="0" width="1" height="1"/><rect x="662" y="4" width="1" height="1"/><rect x="660" y="2" width="1" height="1"/><rect x="666" y="0" width="1" height="1"/><rect x="666" y="4" width="1" height="1"/><rect x="664" y="2" width="1" height="1"/><rect x="670" y="0" width="1" height="1"/><rect x="670" y="4" width="1" height="1"/><rect x="668" y="2" width="1" height="1"/><rect x="674" y="0" width="1" height="1"/><rect x="674" y="4" width="1" height="1"/><rect x="672" y="2" width="1" height="1"/><rect x="678" y="0" width="1" height="1"/><rect x="678" y="4" width="1" height="1"/><rect x="676" y="2" width="1" height="1"/><rect x="682" y="0" width="1" height="1"/><rect x="682" y="4" width="1" height="1"/><rect x="680" y="2" width="1" height="1"/><rect x="686" y="0" width="1" height="1"/><rect x="686" y="4" width="1" height="1"/><rect x="684" y="2" width="1" height="1"/><rect x="690" y="0" width="1" height="1"/><rect x="690" y="4" width="1" height="1"/><rect x="688" y="2" width="1" height="1"/><rect x="694" y="0" width="1" height="1"/><rect x="694" y="4" width="1" height="1"/><rect x="692" y="2" width="1" height="1"/><rect x="698" y="0" width="1" height="1"/><rect x="698" y="4" width="1" height="1"/><rect x="696" y="2" width="1" height="1"/><rect x="702" y="0" width="1" height="1"/><rect x="702" y="4" width="1" height="1"/><rect x="700" y="2" width="1" height="1"/><rect x="706" y="0" width="1" height="1"/><rect x="706" y="4" width="1" height="1"/><rect x="704" y="2" width="1" height="1"/><rect x="710" y="0" width="1" height="1"/><rect x="710" y="4" width="1" height="1"/><rect x="708" y="2" width="1" height="1"/><rect x="714" y="0" width="1" height="1"/><rect x="714" y="4" width="1" height="1"/><rect x="712" y="2" width="1" height="1"/><rect x="718" y="0" width="1" height="1"/><rect x="718" y="4" width="1" height="1"/><rect x="716" y="2" width="1" height="1"/><rect x="722" y="0" width="1" height="1"/><rect x="722" y="4" width="1" height="1"/><rect x="720" y="2" width="1" height="1"/><rect x="726" y="0" width="1" height="1"/><rect x="726" y="4" width="1" height="1"/><rect x="724" y="2" width="1" height="1"/><rect x="730" y="0" width="1" height="1"/><rect x="730" y="4" width="1" height="1"/><rect x="728" y="2" width="1" height="1"/><rect x="734" y="0" width="1" height="1"/><rect x="734" y="4" width="1" height="1"/><rect x="732" y="2" width="1" height="1"/><rect x="738" y="0" width="1" height="1"/><rect x="738" y="4" width="1" height="1"/><rect x="736" y="2" width="1" height="1"/><rect x="742" y="0" width="1" height="1"/><rect x="742" y="4" width="1" height="1"/><rect x="740" y="2" width="1" height="1"/><rect x="746" y="0" width="1" height="1"/><rect x="746" y="4" width="1" height="1"/><rect x="744" y="2" width="1" height="1"/><rect x="750" y="0" width="1" height="1"/><rect x="750" y="4" width="1" height="1"/><rect x="748" y="2" width="1" height="1"/><rect x="754" y="0" width="1" height="1"/><rect x="754" y="4" width="1" height="1"/><rect x="752" y="2" width="1" height="1"/><rect x="758" y="0" width="1" height="1"/><rect x="758" y="4" width="1" height="1"/><rect x="756" y="2" width="1" height="1"/><rect x="762" y="0" width="1" height="1"/><rect x="762" y="4" width="1" height="1"/><rect x="760" y="2" width="1" height="1"/><rect x="766" y="0" width="1" height="1"/><rect x="766" y="4" width="1" height="1"/><rect x="764" y="2" width="1" height="1"/><rect x="770" y="0" width="1" height="1"/><rect x="770" y="4" width="1" height="1"/><rect x="768" y="2" width="1" height="1"/><rect x="774" y="0" width="1" height="1"/><rect x="774" y="4" width="1" height="1"/><rect x="772" y="2" width="1" height="1"/><rect x="778" y="0" width="1" height="1"/><rect x="778" y="4" width="1" height="1"/><rect x="776" y="2" width="1" height="1"/><rect x="782" y="0" width="1" height="1"/><rect x="782" y="4" width="1" height="1"/><rect x="780" y="2" width="1" height="1"/><rect x="786" y="0" width="1" height="1"/><rect x="786" y="4" width="1" height="1"/><rect x="784" y="2" width="1" height="1"/><rect x="790" y="0" width="1" height="1"/><rect x="790" y="4" width="1" height="1"/><rect x="788" y="2" width="1" height="1"/><rect x="794" y="0" width="1" height="1"/><rect x="794" y="4" width="1" height="1"/><rect x="792" y="2" width="1" height="1"/><rect x="798" y="0" width="1" height="1"/><rect x="798" y="4" width="1" height="1"/><rect x="796" y="2" width="1" height="1"/><rect x="802" y="0" width="1" height="1"/><rect x="802" y="4" width="1" height="1"/><rect x="800" y="2" width="1" height="1"/><rect x="806" y="0" width="1" height="1"/><rect x="806" y="4" width="1" height="1"/><rect x="804" y="2" width="1" height="1"/><rect x="810" y="0" width="1" height="1"/><rect x="810" y="4" width="1" height="1"/><rect x="808" y="2" width="1" height="1"/><rect x="814" y="0" width="1" height="1"/><rect x="814" y="4" width="1" height="1"/><rect x="812" y="2" width="1" height="1"/></g></svg>
<svg class="r" style="left:1222px;top:752.5px;" width="9" height="5" viewBox="0 0 9 5"><polygon points="0,0 9,0 4.5,5" fill="#1a1a1a"/></svg><svg class="r" style="left:1238.5px;top:749px;" width="9" height="12" viewBox="0 0 9 12"><path d="M2.5 0.8 H6.2 V6.5 M2.5 0.8 V6.5 M0.5 7 H8 M4.3 7 V11.5" fill="none" stroke="#15152a" stroke-width="1.1"/><path d="M5.7 1 V6.5" stroke="#15152a" stroke-width="1.5"/></svg><svg class="r" style="left:1254px;top:750px;" width="10" height="10" viewBox="0 0 10 10"><path d="M1 1 L9 9 M9 1 L1 9" stroke="#15152a" stroke-width="1.5"/></svg>
<div class="r" style="left:328px;top:765px;width:944px;height:181px;background:#a9aca1;"></div>
<div class="r" style="left:0px;top:944.6px;width:1272px;height:1.4px;background:#0a78d4;"></div>
</body></html>
